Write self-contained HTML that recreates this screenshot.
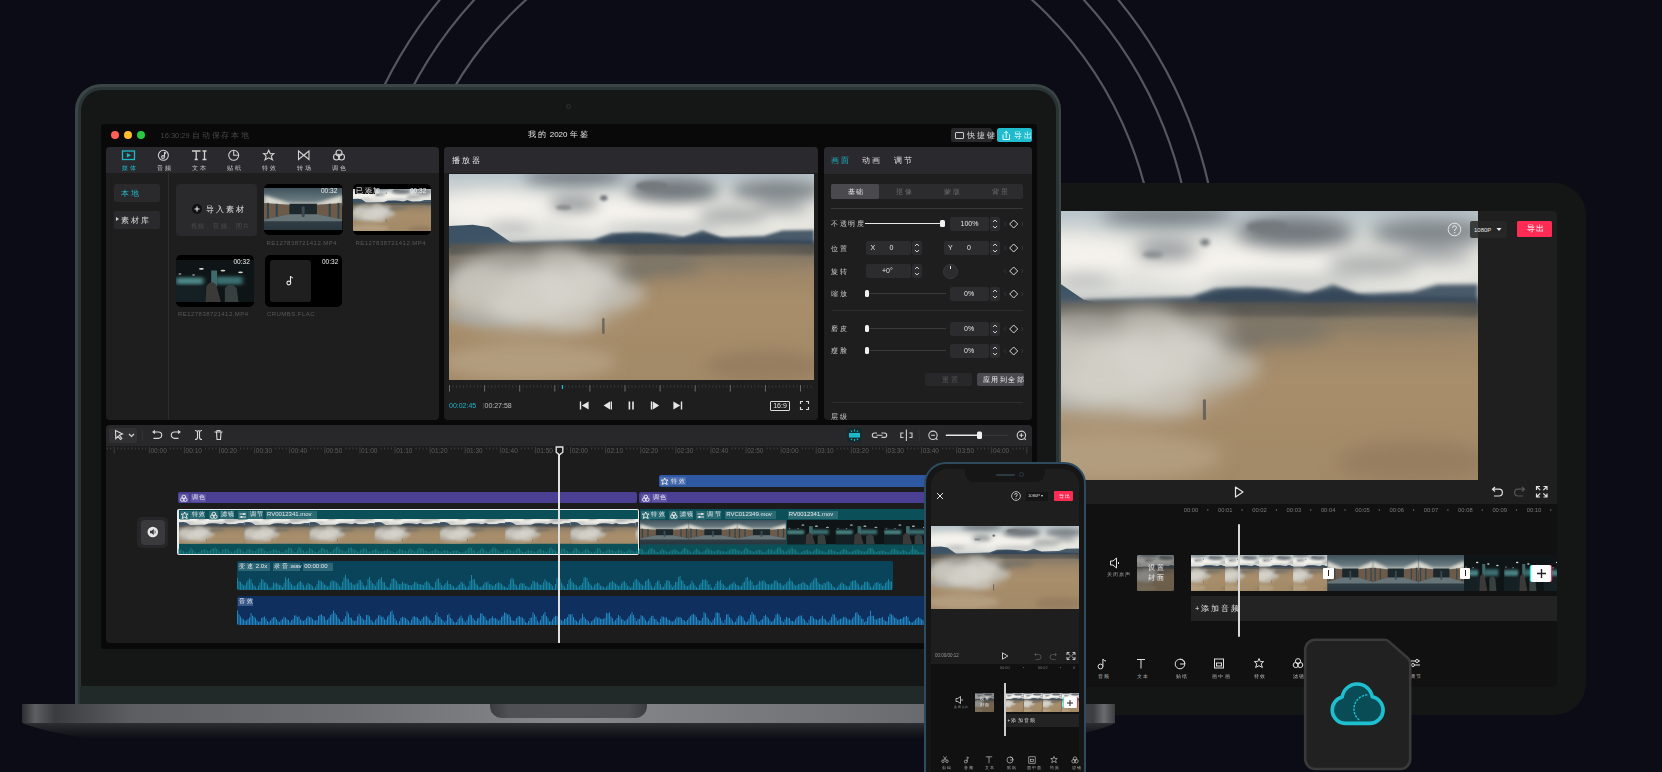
<!DOCTYPE html>
<html><head><meta charset="utf-8">
<style>
*{margin:0;padding:0;box-sizing:border-box}
html,body{width:1662px;height:772px;overflow:hidden;background:#0b0c16;font-family:"Liberation Sans",sans-serif;color:#ddd}
.a{position:absolute}
.cj{letter-spacing:.25em}
svg.a{overflow:visible}
</style></head>
<body>
<svg width="0" height="0" style="position:absolute">
<defs>
<filter id="b2" x="-50%" y="-50%" width="200%" height="200%"><feGaussianBlur stdDeviation="2"/></filter>
<filter id="b4" x="-50%" y="-50%" width="200%" height="200%"><feGaussianBlur stdDeviation="4"/></filter>
<filter id="b8" x="-50%" y="-50%" width="200%" height="200%"><feGaussianBlur stdDeviation="8"/></filter>
<filter id="f6" x="-50%" y="-50%" width="200%" height="200%"><feGaussianBlur stdDeviation="6"/></filter>
<filter id="f12" x="-50%" y="-50%" width="200%" height="200%"><feGaussianBlur stdDeviation="12"/></filter>
<filter id="f25" x="-50%" y="-50%" width="200%" height="200%"><feGaussianBlur stdDeviation="25"/></filter>
<filter id="f40" x="-50%" y="-50%" width="200%" height="200%"><feGaussianBlur stdDeviation="40"/></filter>
<linearGradient id="skyg" x1="0" y1="0" x2="0" y2="1">
<stop offset="0" stop-color="#b8c5cb"/><stop offset="0.25" stop-color="#d4d8d6"/><stop offset="0.5" stop-color="#e6e5df"/><stop offset="0.85" stop-color="#dedfdb"/><stop offset="1" stop-color="#c3c8c8"/>
</linearGradient>
<linearGradient id="gndg" x1="0" y1="0" x2="0" y2="1">
<stop offset="0" stop-color="#5f5d58"/><stop offset="0.1" stop-color="#7a7265"/><stop offset="0.2" stop-color="#9c8668"/><stop offset="0.45" stop-color="#a88e6b"/><stop offset="1" stop-color="#a28967"/>
</linearGradient>
<symbol id="land" viewBox="0 0 1368 772" preserveAspectRatio="none">
<rect y="250" width="1368" height="522" fill="url(#gndg)"/>
<rect width="1368" height="270" fill="url(#skyg)"/>
<g filter="url(#f25)">
<ellipse cx="180" cy="130" rx="230" ry="60" fill="#f4f2ec"/>
<ellipse cx="700" cy="150" rx="300" ry="60" fill="#f5f3ed"/>
<ellipse cx="1180" cy="175" rx="210" ry="45" fill="#e9e8e2"/>
</g>
<g filter="url(#f25)">
<ellipse cx="470" cy="12" rx="190" ry="30" fill="#737a80"/>
<ellipse cx="840" cy="60" rx="170" ry="45" fill="#70767b"/>
<ellipse cx="1230" cy="60" rx="170" ry="38" fill="#7d8388"/>
<ellipse cx="470" cy="112" rx="90" ry="28" fill="#93979a"/>
<ellipse cx="1060" cy="155" rx="130" ry="30" fill="#abafaf"/>
<ellipse cx="230" cy="200" rx="90" ry="16" fill="#b0b3b3"/>
<ellipse cx="800" cy="205" rx="220" ry="18" fill="#babdbc"/>
<ellipse cx="1250" cy="125" rx="100" ry="22" fill="#a4a8aa"/>
</g>
<g filter="url(#f6)">
<ellipse cx="580" cy="90" rx="14" ry="10" fill="#6d7277"/>
<ellipse cx="430" cy="125" rx="30" ry="10" fill="#8a8e91"/>
<ellipse cx="760" cy="45" rx="60" ry="18" fill="#74797e"/>
</g>
<path d="M250 255 L540 246 L610 222 L700 218 L810 224 L880 236 L950 212 L1020 238 L1180 232 L1250 212 L1368 210 L1368 278 L0 282 Z" fill="#485a69" filter="url(#f6)"/>
<path d="M560 250 L640 228 L760 226 L840 246 L960 226 L1060 250 L1200 246 L1368 250 L1368 278 L560 278 Z" fill="#36475a" filter="url(#f6)"/>
<path d="M0 195 L90 190 L150 200 L230 255 L300 272 L0 278 Z" fill="#3d5365"/>
<g filter="url(#f6)">
<rect x="0" y="262" width="1368" height="42" fill="#57554f"/>
</g>
<g filter="url(#f25)">
<ellipse cx="320" cy="370" rx="430" ry="80" fill="#6c685f"/>
<ellipse cx="760" cy="345" rx="200" ry="38" fill="#7c7467"/>
<ellipse cx="1150" cy="330" rx="240" ry="26" fill="#8d7e68"/>
<ellipse cx="1180" cy="720" rx="220" ry="60" fill="#977e60"/>
<ellipse cx="300" cy="705" rx="330" ry="70" fill="#b29d7f"/>
</g>
<g filter="url(#f12)">
<ellipse cx="140" cy="530" rx="150" ry="40" fill="#9b9891" opacity="0.85"/>
</g>
<g filter="url(#f40)">
<ellipse cx="320" cy="440" rx="360" ry="140" fill="#c4c1b9" opacity="0.9"/>
</g>
<g filter="url(#f25)">
<ellipse cx="300" cy="460" rx="170" ry="90" fill="#d3d0c8" opacity="0.9"/>
<ellipse cx="470" cy="410" rx="150" ry="95" fill="#d6d3cb" opacity="0.85"/>
<ellipse cx="120" cy="410" rx="110" ry="80" fill="#c8c5bd" opacity="0.8"/>
<ellipse cx="640" cy="450" rx="100" ry="45" fill="#c2bfb7" opacity="0.7"/>
<ellipse cx="420" cy="320" rx="90" ry="45" fill="#bdbab2" opacity="0.7"/>
<ellipse cx="590" cy="330" rx="70" ry="35" fill="#aeaba3" opacity="0.65"/>
<ellipse cx="200" cy="330" rx="80" ry="30" fill="#a9a69e" opacity="0.6"/>
<ellipse cx="460" cy="550" rx="110" ry="35" fill="#cfccc4" opacity="0.6"/>
</g>
<rect x="574" y="540" width="9" height="60" rx="4" fill="#57544f" opacity="0.75"/>
</symbol>
<symbol id="landS" viewBox="0 0 1368 772" preserveAspectRatio="xMidYMid slice"><use href="#land" width="1368" height="772"/></symbol>
<linearGradient id="ceil" x1="0" y1="0" x2="0" y2="1"><stop offset="0" stop-color="#3f525c"/><stop offset="1" stop-color="#7c8c90"/></linearGradient>
<linearGradient id="flr" x1="0" y1="0" x2="0" y2="1"><stop offset="0" stop-color="#3e4c54"/><stop offset="1" stop-color="#2a363d"/></linearGradient>
<symbol id="corr" viewBox="0 0 80 48" preserveAspectRatio="none">
<rect width="80" height="48" fill="#33424a"/>
<rect width="80" height="20" fill="url(#ceil)"/>
<path d="M0 8 L26 17 L54 17 L80 8 L80 20 L0 20 Z" fill="#d9d8cf" filter="url(#b2)"/>
<path d="M0 20 L80 20 L80 48 L0 48 Z" fill="url(#flr)"/>
<path d="M0 17 L26 19 L26 30 L0 36 Z" fill="#6e5a48"/>
<path d="M80 17 L54 19 L54 30 L80 36 Z" fill="#6e5a48"/>
<rect x="3" y="17" width="2" height="19" fill="#2c4650"/><rect x="12" y="18" width="2" height="15" fill="#2c4650"/>
<rect x="75" y="17" width="2" height="19" fill="#2c4650"/><rect x="66" y="18" width="2" height="15" fill="#2c4650"/>
<rect x="26" y="18" width="28" height="12" fill="#1d282d"/>
<path d="M0 36 L26 30 L54 30 L80 36 L80 38 L0 38 Z" fill="#8a979a" opacity="0.6"/>
<rect x="38.5" y="21" width="3" height="12" rx="1" fill="#3d4a50"/>
</symbol>
<symbol id="crowd" viewBox="0 0 80 48" preserveAspectRatio="none">
<rect width="80" height="48" fill="#0f1517"/>
<rect x="0" y="20" width="28" height="8" fill="#4c8585" filter="url(#b2)"/>
<rect x="40" y="19" width="28" height="9" fill="#3a6e70" filter="url(#b2)"/>
<rect x="36" y="12" width="6" height="18" fill="#3e6a6c"/>
<ellipse cx="26" cy="10" rx="2.5" ry="1" fill="#e0e6e0"/><ellipse cx="48" cy="12" rx="2.5" ry="1" fill="#d0d8d0"/><ellipse cx="66" cy="14" rx="2.5" ry="1" fill="#d0d8d0"/>
<ellipse cx="4" cy="16" rx="1.5" ry="0.8" fill="#aab"/><ellipse cx="18" cy="17" rx="1.5" ry="0.8" fill="#aab"/>
<path d="M30 48 L31 30 Q36 22 41 28 L46 48 Z" fill="#3b3a38"/>
<path d="M50 48 L50 32 Q56 24 62 32 L64 48 Z" fill="#38403f"/>
<rect x="0" y="30" width="30" height="18" fill="#142024"/>
</symbol>
</defs>
</svg>

<!-- arcs -->
<svg class="a" style="left:0;top:0" width="1662" height="772">
<g fill="none" stroke="#55575f" stroke-width="2.2">
<circle cx="779" cy="280" r="377.5"/>
<circle cx="779" cy="280" r="414"/>
<circle cx="779" cy="280" r="440"/>
</g>
</svg>


<!-- TABLET -->
<div class="a" style="left:960px;top:183px;width:626px;height:532px;background:#141615;border-radius:32px"></div>
<div class="a" style="left:1000px;top:211px;width:557px;height:476px;background:#111;border-radius:4px;overflow:hidden">
</div>
<svg class="a" style="left:1004px;top:211px" width="474" height="269"><use href="#land" width="474" height="269"/></svg>
<div class="a" style="left:1478px;top:211px;width:79px;height:269px;background:#1f1f1f;border-radius:0 4px 0 0"></div>
<div class="a" style="left:1004px;top:480px;width:553px;height:23.5px;background:#1f1f1f"></div>


<svg class="a" style="left:1446px;top:221px" width="17" height="17"><circle cx="8.5" cy="8.5" r="6.3" fill="none" stroke="#e6e6e6" stroke-width="1"/><path d="M6.5 7 Q6.5 4.8 8.5 4.8 Q10.5 4.8 10.5 6.7 Q10.5 8 8.6 8.8 V10" fill="none" stroke="#e6e6e6" stroke-width="1"/><circle cx="8.6" cy="11.8" r="0.7" fill="#e6e6e6"/></svg>
<div class="a" style="left:1470px;top:221.4px;width:36.8px;height:16.2px;background:rgba(40,40,40,.85);border-radius:2px"></div>
<div class="a" style="left:1474px;top:225.5px;font-size:6px;line-height:8px;color:#e6e6e6;white-space:nowrap">1080P</div>
<svg class="a" style="left:1496px;top:227px" width="6" height="5"><path d="M0.5 1 H5.5 L3 4 Z" fill="#eee"/></svg>
<div class="a" style="left:1517px;top:221px;width:34.7px;height:16.2px;background:#fe2c55;border-radius:1.5px"></div>
<div class="a" style="left:1526.5px;top:225px;font-size:7.5px;line-height:8px;color:#fff;white-space:nowrap"><span class="cj">导出</span></div>
<svg class="a" style="left:1232px;top:484.5px" width="14" height="14"><path d="M3.5 2 L11 7 L3.5 12 Z" fill="none" stroke="#e6e6e6" stroke-width="1.2" stroke-linejoin="round"/></svg>
<svg class="a" style="left:1488px;top:484px" width="62" height="16"><g fill="none" stroke-width="1.2"><path d="M4.5 5.2 H11 A3.4 3.4 0 0 1 11 12 H6 M7 3 L4.5 5.2 L7 7.5" stroke="#e0e0e0"/><path d="M36.5 5.2 H30 A3.4 3.4 0 0 0 30 12 H35 M34 3 L36.5 5.2 L34 7.5" stroke="#555"/><path d="M48.5 6 V2.5 H52 M55.5 2.5 H59 V6 M59 9.5 V13 H55.5 M52 13 H48.5 V9.5 M49 3 L52.2 6.2 M58.5 3 L55.3 6.2 M58.5 12.5 L55.3 9.3 M49 12.5 L52.2 9.3" stroke="#e0e0e0"/></g></svg>
<div class="a" style="left:0;top:506.5px;font-size:5.8px;line-height:7px;color:#7a7a7a;white-space:nowrap"><span class="a" style="left:1183.7px">00:00</span><span class="a" style="left:1218.0px">00:01</span><span class="a" style="left:1252.3px">00:02</span><span class="a" style="left:1286.6px">00:03</span><span class="a" style="left:1320.9px">00:04</span><span class="a" style="left:1355.2px">00:05</span><span class="a" style="left:1389.5px">00:06</span><span class="a" style="left:1423.8px">00:07</span><span class="a" style="left:1458.1px">00:08</span><span class="a" style="left:1492.4px">00:09</span><span class="a" style="left:1526.7px">00:10</span></div>
<svg class="a" style="left:0;top:0" width="1600" height="600"><g fill="#777"><circle cx="1207.8" cy="510" r="0.7"/><circle cx="1242.1" cy="510" r="0.7"/><circle cx="1276.4" cy="510" r="0.7"/><circle cx="1310.7" cy="510" r="0.7"/><circle cx="1345.0" cy="510" r="0.7"/><circle cx="1379.3" cy="510" r="0.7"/><circle cx="1413.6" cy="510" r="0.7"/><circle cx="1447.9" cy="510" r="0.7"/><circle cx="1482.2" cy="510" r="0.7"/><circle cx="1516.5" cy="510" r="0.7"/><circle cx="1550.8" cy="510" r="0.7"/></g></svg>
<svg class="a" style="left:1108px;top:556px" width="14" height="14"><path d="M2.5 5 H5 L8.5 2 V12 L5 9 H2.5 Z" fill="none" stroke="#e0e0e0" stroke-width="1"/><path d="M10.5 6 V8" stroke="#e0e0e0" stroke-width="1"/></svg>
<div class="a" style="left:1106.5px;top:572px;font-size:4.6px;line-height:6px;color:#aaa;white-space:nowrap"><span class="cj">关闭原声</span></div>
<div class="a" style="left:1137px;top:555px;width:37px;height:36px;border-radius:2px;overflow:hidden"><svg class="a" style="left:-10px;top:0" width="64" height="36"><use href="#land" width="64" height="36"/></svg><div class="a" style="left:0;top:0;width:37px;height:36px;background:rgba(40,40,40,.45)"></div></div>
<div class="a" style="left:1148px;top:563px;font-size:7px;line-height:9.5px;color:#f0f0f0;white-space:nowrap;width:20px"><span class="cj">设置</span><br><span class="cj">封面</span></div>
<div class="a" style="left:1191px;top:555px;width:366px;height:36px;overflow:hidden"><svg class="a" style="left:0;top:0" width="366" height="36"><use href="#landS" x="0.0" y="0" width="34.6" height="36"/><use href="#landS" x="34.1" y="0" width="34.6" height="36"/><use href="#landS" x="68.2" y="0" width="34.6" height="36"/><use href="#landS" x="102.3" y="0" width="34.6" height="36"/><use href="#corr" x="136.3" y="0" width="46" height="36"/><use href="#corr" x="181.8" y="0" width="46" height="36"/><use href="#corr" x="227.3" y="0" width="46" height="36"/><use href="#crowd" x="273.0" y="0" width="40.5" height="36"/><use href="#crowd" x="313.0" y="0" width="40.5" height="36"/><use href="#crowd" x="353.0" y="0" width="40.5" height="36"/></svg></div>
<div class="a" style="left:1323px;top:567.5px;width:10.7px;height:11.2px;background:#fff;border-radius:1px"></div><div class="a" style="left:1327.8px;top:570px;width:1.2px;height:6.2px;background:#222"></div>
<div class="a" style="left:1459.7px;top:567.5px;width:10.8px;height:11.2px;background:#fff;border-radius:1px"></div><div class="a" style="left:1464.5px;top:570px;width:1.2px;height:6.2px;background:#222"></div>
<div class="a" style="left:1531px;top:564.6px;width:19.7px;height:17.2px;background:#fff;border-radius:2px;box-shadow:-1.2px 0 0 #25f4ee,1.2px 0 0 #fe2c55"></div>
<svg class="a" style="left:1533.5px;top:566px" width="15" height="15"><path d="M7.5 3 V12 M3 7.5 H12" stroke="#222" stroke-width="1.4"/></svg>
<div class="a" style="left:1191px;top:596px;width:366px;height:25px;background:#232323"></div>
<div class="a" style="left:1195px;top:604px;font-size:7.5px;line-height:9px;color:#e6e6e6;white-space:nowrap">+ <span class="cj">添加音频</span></div>
<div class="a" style="left:1238px;top:524px;width:1.8px;height:113px;background:#d8d8d8;border-radius:1px"></div>
<svg class="a" style="left:1095.3px;top:656px" width="14" height="14"><g fill="none" stroke="#e0e0e0" stroke-width="1"><circle cx="5.5" cy="10.5" r="2.4"/><path d="M7.9 10.5 V3 Q9 5 11 5"/></g></svg>
<div class="a" style="left:1097.5px;top:672.5px;font-size:5.3px;line-height:6px;color:#bbb;white-space:nowrap"><span class="cj">音频</span></div>
<svg class="a" style="left:1134.3px;top:656px" width="14" height="14"><g fill="none" stroke="#e0e0e0" stroke-width="1"><path d="M3 3.5 H11 M7 3.5 V12.5"/></g></svg>
<div class="a" style="left:1136.5px;top:672.5px;font-size:5.3px;line-height:6px;color:#bbb;white-space:nowrap"><span class="cj">文本</span></div>
<svg class="a" style="left:1173.4px;top:656px" width="14" height="14"><g fill="none" stroke="#e0e0e0" stroke-width="1"><circle cx="7" cy="8" r="4.8"/><path d="M7 3.2 Q11.8 3.2 11.8 8 L7 8"/></g></svg>
<div class="a" style="left:1175.6px;top:672.5px;font-size:5.3px;line-height:6px;color:#bbb;white-space:nowrap"><span class="cj">贴纸</span></div>
<svg class="a" style="left:1212.4px;top:656px" width="14" height="14"><g fill="none" stroke="#e0e0e0" stroke-width="1"><rect x="2.5" y="3" width="9" height="9"/><rect x="4.5" y="7" width="5" height="3"/></g></svg>
<div class="a" style="left:1212.0px;top:672.5px;font-size:5.3px;line-height:6px;color:#bbb;white-space:nowrap"><span class="cj">画中画</span></div>
<svg class="a" style="left:1251.5px;top:656px" width="14" height="14"><g fill="none" stroke="#e0e0e0" stroke-width="1"><path d="M7 2.5 L8.3 5.7 L11.6 5.5 L9.2 8 L10.4 11.5 L7 9.7 L3.6 11.5 L4.8 8 L2.4 5.5 L5.7 5.7 Z"/></g></svg>
<div class="a" style="left:1253.7px;top:672.5px;font-size:5.3px;line-height:6px;color:#bbb;white-space:nowrap"><span class="cj">特效</span></div>
<svg class="a" style="left:1290.5px;top:656px" width="14" height="14"><g fill="none" stroke="#e0e0e0" stroke-width="1"><circle cx="7" cy="5.2" r="2.6"/><circle cx="4.8" cy="9" r="2.6"/><circle cx="9.2" cy="9" r="2.6"/></g></svg>
<div class="a" style="left:1292.7px;top:672.5px;font-size:5.3px;line-height:6px;color:#bbb;white-space:nowrap"><span class="cj">滤镜</span></div>
<svg class="a" style="left:1407.6px;top:656px" width="14" height="14"><g fill="none" stroke="#e0e0e0" stroke-width="1"><path d="M2 5 H12 M2 9 H12"/><circle cx="9" cy="5" r="1.5" fill="#111"/><circle cx="5" cy="9" r="1.5" fill="#111"/></g></svg>
<div class="a" style="left:1409.8px;top:672.5px;font-size:5.3px;line-height:6px;color:#bbb;white-space:nowrap"><span class="cj">调节</span></div>
<!-- LAPTOP -->
<div class="a" style="left:75px;top:84px;width:986px;height:620px;background:#3b4545;border-radius:26px 26px 0 0"></div><div class="a" style="left:77.5px;top:86.5px;width:981px;height:617px;background:#2b3434;border-radius:23.5px 23.5px 0 0"></div><div class="a" style="left:80.5px;top:89.5px;width:975px;height:614.5px;background:#141716;border-radius:20.5px 20.5px 0 0"></div>
<div class="a" style="left:80px;top:686px;width:976px;height:18px;background:#222a29"></div>
<div class="a" style="left:565.5px;top:103.5px;width:5px;height:5px;border:1px solid #2e3232;border-radius:50%"></div>
<div class="a" style="left:101px;top:123.5px;width:936px;height:525.5px;background:#09090a;border-radius:3px"></div>
<div class="a" style="left:22px;top:704px;width:1093px;height:19px;background:linear-gradient(90deg,#2a2c2f 0%,#5d5f62 1.2%,#3a3c3f 3%,#5c5e61 10%,#6c6e71 30%,#86888b 50%,#707275 75%,#5e6063 92%,#3b3d40 98%,#6a6c6f 99%,#3a3c3e 100%)"></div>
<div class="a" style="left:490px;top:704px;width:157px;height:13.5px;background:linear-gradient(90deg,#3a3c3f,#4e5053 12%,#505256 50%,#4e5053 88%,#3a3c3f);border-radius:0 0 12px 12px"></div>
<svg class="a" style="left:0;top:720px" width="1130" height="22"><defs><linearGradient id="bsh" x1="0" y1="0" x2="0" y2="1"><stop offset="0" stop-color="#2c2e32"/><stop offset="0.5" stop-color="#1c1d22"/><stop offset="1" stop-color="#0d0e16"/></linearGradient></defs>
<path d="M22 3 H1115 Q1100 11 1060 18 H85 Q45 12 22 3 Z" fill="url(#bsh)"/></svg>



<!-- SCREEN UI -->
<div class="a" style="left:110.5px;top:131px;width:8.4px;height:8.4px;border-radius:50%;background:#fe5f57"></div>
<div class="a" style="left:123.6px;top:131px;width:8.4px;height:8.4px;border-radius:50%;background:#febc2e"></div>
<div class="a" style="left:136.7px;top:131px;width:8.4px;height:8.4px;border-radius:50%;background:#28c840"></div>
<div class="a" style="left:160.5px;top:130.5px;font-size:7.5px;line-height:9px;color:#47474a;white-space:nowrap">16:30:29 <span class="cj">自动保存本地</span></div>
<div class="a" style="left:527.5px;top:130px;font-size:8px;line-height:9px;color:#e6e6e6;white-space:nowrap"><span class="cj">我的</span> 2020 <span class="cj">年鉴</span></div>
<div class="a" style="left:951px;top:128px;width:40.5px;height:14px;background:#29292c;border-radius:2.5px"></div>
<div class="a" style="left:954.5px;top:131.5px;width:9px;height:7px;border:1px solid #cfcfcf;border-radius:1px"></div>
<div class="a" style="left:967px;top:130.5px;font-size:7.5px;line-height:9px;color:#d8d8d8;white-space:nowrap"><span class="cj">快捷键</span></div>
<div class="a" style="left:997px;top:128px;width:35px;height:14.3px;background:#1ebccc;border-radius:2.5px"></div>
<svg class="a" style="left:1001px;top:129.5px" width="10" height="11"><path d="M2 4.5 V9.5 H8.5 V4.5 M5.2 8 V1.5 M3.2 3.3 L5.2 1.3 L7.2 3.3" fill="none" stroke="#e8fbfd" stroke-width="1"/></svg>
<div class="a" style="left:1014px;top:130.5px;font-size:7.5px;line-height:9px;color:#eafcfe;white-space:nowrap"><span class="cj">导出</span></div>

<!-- media panel -->
<div class="a" style="left:106px;top:147px;width:333px;height:272.5px;background:#1e1e1f;border-radius:4px;overflow:hidden">
  <div class="a" style="left:0;top:0;width:333px;height:26px;background:#2a292e"></div>
  <div class="a" style="left:62px;top:26px;width:1px;height:247px;background:#2c2c2e"></div>
</div>
<!-- player panel -->
<div class="a" style="left:444px;top:147px;width:374px;height:272.5px;background:#1e1e1f;border-radius:4px;overflow:hidden">
  <div class="a" style="left:0;top:0;width:374px;height:26px;background:#2a292e"></div>
</div>

<!-- media tabs -->
<svg class="a" style="left:106px;top:147px" width="333" height="26">
<g fill="none" stroke="#d0d0d0" stroke-width="1.1">
<rect x="16.5" y="4" width="12" height="8.5" stroke="#1fb8c8" stroke-width="1.3"/>
<path d="M20.8 6 L25 8.2 L20.8 10.4 Z" fill="#1fb8c8" stroke="none"/>
<circle cx="57.4" cy="8.3" r="5"/>
<path d="M58.5 5 V10 M58.5 5 L60 6.5" /><circle cx="57" cy="10" r="1.4"/>
<path d="M86 4 H94.5 M90.2 4 V12.5 M88.6 12.5 H91.8 M96.5 4 H100.5 M98.5 4 V12.5 M96.5 12.5 H100.5" stroke-width="1.3"/>
<circle cx="127.7" cy="8.3" r="5"/><path d="M127.7 3.3 V8.3 L132.7 8.3"/>
<path d="M162.7 3.3 L164.2 6.8 L167.8 6.6 L165.2 9.2 L166.5 12.8 L162.7 10.8 L159 12.8 L160.2 9.2 L157.6 6.6 L161.2 6.8 Z"/>
<path d="M192.5 4 V12.5 L203 4 V12.5 Z"/>
<circle cx="233" cy="6" r="3"/><circle cx="230.5" cy="10" r="3"/><circle cx="235.5" cy="10" r="3"/>
</g>
</svg>
<div class="a" style="left:106px;top:163.5px;width:333px;font-size:6.4px;line-height:7px;white-space:nowrap">
<span class="a" style="left:16px;color:#1fb8c8"><span class="cj">媒体</span></span>
<span class="a" style="left:51px;color:#c8c8c8"><span class="cj">音频</span></span>
<span class="a" style="left:86px;color:#c8c8c8"><span class="cj">文本</span></span>
<span class="a" style="left:121px;color:#c8c8c8"><span class="cj">贴纸</span></span>
<span class="a" style="left:156px;color:#c8c8c8"><span class="cj">特效</span></span>
<span class="a" style="left:191px;color:#c8c8c8"><span class="cj">转场</span></span>
<span class="a" style="left:226px;color:#c8c8c8"><span class="cj">调色</span></span>
</div>
<!-- sidebar -->
<div class="a" style="left:113.7px;top:183.8px;width:46.7px;height:18.2px;background:#2a2a2c;border-radius:2.5px"></div>
<div class="a" style="left:121px;top:188.5px;font-size:7.5px;line-height:9px;color:#1fb8c8;white-space:nowrap"><span class="cj">本地</span></div>
<div class="a" style="left:113.7px;top:210.5px;width:46.7px;height:18.4px;background:#2a2a2c;border-radius:2.5px"></div>
<svg class="a" style="left:115px;top:216px" width="5" height="6"><path d="M1 1 L4 3 L1 5 Z" fill="#cfcfcf"/></svg>
<div class="a" style="left:121px;top:215.5px;font-size:7.5px;line-height:9px;color:#dcdcdc;white-space:nowrap"><span class="cj">素材库</span></div>
<!-- import -->
<div class="a" style="left:176.2px;top:184.2px;width:80.7px;height:51.6px;background:#2a2a2c;border-radius:4px"></div>
<div class="a" style="left:192px;top:204px;width:10px;height:10px;border-radius:50%;background:#111"></div>
<svg class="a" style="left:192px;top:204px" width="10" height="10"><path d="M5 2.5 V7.5 M2.5 5 H7.5" stroke="#eee" stroke-width="1.1"/></svg>
<div class="a" style="left:206px;top:205px;font-size:8px;line-height:9px;color:#e0e0e0;white-space:nowrap"><span class="cj">导入素材</span></div>
<div class="a" style="left:190.5px;top:222.5px;font-size:6px;line-height:7px;color:#4e4e50;white-space:nowrap"><span class="cj">视频、音频、图片</span></div>
<!-- thumbs -->
<div class="a" style="left:264.2px;top:184.2px;width:78.4px;height:51.2px;background:#000;border-radius:5px;overflow:hidden">
 <svg class="a" style="left:0;top:4.2px" width="78.4" height="42"><use href="#corr" width="78.4" height="42"/></svg>
</div>
<div class="a" style="left:321px;top:186.5px;font-size:6.5px;line-height:7px;color:#f0f0f0;white-space:nowrap">00:32</div>
<div class="a" style="left:352.7px;top:184.2px;width:78.3px;height:51.2px;background:#000;border-radius:5px;overflow:hidden">
 <svg class="a" style="left:0;top:4.7px" width="78.3" height="42"><use href="#landS" width="78.3" height="42"/></svg>
</div>
<div class="a" style="left:354.5px;top:186.8px;width:20px;height:7.5px;background:#111;"></div>
<div class="a" style="left:356px;top:186.8px;font-size:6.5px;line-height:7px;color:#f0f0f0;white-space:nowrap"><span class="cj">已添加</span></div>
<div class="a" style="left:410px;top:186.8px;font-size:6.5px;line-height:7px;color:#f0f0f0;white-space:nowrap">00:32</div>
<div class="a" style="left:266.5px;top:239.5px;font-size:6px;letter-spacing:.45px;line-height:7px;color:#58585a;white-space:nowrap">RE127838721412.MP4</div>
<div class="a" style="left:355.5px;top:239.5px;font-size:6px;letter-spacing:.45px;line-height:7px;color:#58585a;white-space:nowrap">RE127838721412.MP4</div>
<div class="a" style="left:175.9px;top:255px;width:78.2px;height:51.8px;background:#000;border-radius:5px;overflow:hidden">
 <svg class="a" style="left:0;top:4.5px" width="78.2" height="42"><use href="#crowd" width="78.2" height="42"/></svg>
</div>
<div class="a" style="left:233.5px;top:258px;font-size:6.5px;line-height:7px;color:#f0f0f0;white-space:nowrap">00:32</div>
<div class="a" style="left:264.5px;top:255px;width:77.7px;height:51.8px;background:#000;border-radius:5px"></div>
<div class="a" style="left:269.7px;top:260.2px;width:41.3px;height:41.8px;background:#1f1f20;border-radius:3px"></div>
<svg class="a" style="left:284px;top:274px" width="12" height="13"><path d="M6.5 2 V9" stroke="#e6e6e6" stroke-width="1.1" fill="none"/><circle cx="4.8" cy="9" r="1.9" fill="none" stroke="#e6e6e6" stroke-width="1.1"/><path d="M6.5 2 Q7.5 4 9 4" stroke="#e6e6e6" stroke-width="1" fill="none"/></svg>
<div class="a" style="left:322px;top:258px;font-size:6.5px;line-height:7px;color:#f0f0f0;white-space:nowrap">00:32</div>
<div class="a" style="left:178px;top:311px;font-size:6px;letter-spacing:.45px;line-height:7px;color:#58585a;white-space:nowrap">RE127838721412.MP4</div>
<div class="a" style="left:267px;top:311px;font-size:6px;letter-spacing:.45px;line-height:7px;color:#58585a;white-space:nowrap">CRUMBS.FLAC</div>

<div class="a" style="left:452px;top:155.5px;font-size:8px;line-height:9px;color:#e6e6e6;white-space:nowrap"><span class="cj">播放器</span></div>
<svg class="a" style="left:449px;top:174px" width="365" height="206"><use href="#land" width="365" height="206"/></svg>
<!-- props panel -->
<div class="a" style="left:824px;top:147px;width:208px;height:272.5px;background:#1e1e1f;border-radius:4px;overflow:hidden">
  <div class="a" style="left:0;top:0;width:208px;height:27px;background:#2a292e"></div>
</div>

<!-- player controls -->
<svg class="a" style="left:449px;top:382px" width="365" height="11">
<path d="M4.01 3v3M7.52 3v3M11.03 3v3M14.54 3v3M18.05 3v3M21.56 3v3M25.07 3v3M28.58 3v3M32.09 3v3M39.11 3v3M42.62 3v3M46.13 3v3M49.64 3v3M53.15 3v3M56.66 3v3M60.17 3v3M63.68 3v3M67.19 3v3M74.21 3v3M77.72 3v3M81.23 3v3M84.74 3v3M88.25 3v3M91.76 3v3M95.27 3v3M98.78 3v3M102.29 3v3M109.31 3v3M112.82 3v3M116.33 3v3M119.84 3v3M123.35 3v3M126.86 3v3M130.37 3v3M133.88 3v3M137.39 3v3M144.41 3v3M147.92 3v3M151.43 3v3M154.94 3v3M158.45 3v3M161.96 3v3M165.47 3v3M168.98 3v3M172.49 3v3M179.51 3v3M183.02 3v3M186.53 3v3M190.04 3v3M193.55 3v3M197.06 3v3M200.57 3v3M204.08 3v3M207.59 3v3M214.61 3v3M218.12 3v3M221.63 3v3M225.14 3v3M228.65 3v3M232.16 3v3M235.67 3v3M239.18 3v3M242.69 3v3M249.71 3v3M253.22 3v3M256.73 3v3M260.24 3v3M263.75 3v3M267.26 3v3M270.77 3v3M274.28 3v3M277.79 3v3M284.81 3v3M288.32 3v3M291.83 3v3M295.34 3v3M298.85 3v3M302.36 3v3M305.87 3v3M309.38 3v3M312.89 3v3M319.91 3v3M323.42 3v3M326.93 3v3M330.44 3v3M333.95 3v3M337.46 3v3M340.97 3v3M344.48 3v3M347.99 3v3M355.01 3v3M358.52 3v3M362.03 3v3" stroke="#363638" stroke-width="0.9"/>
<path d="M0.50 3v6.6M35.60 3v6.6M70.70 3v6.6M105.80 3v6.6M140.90 3v6.6M176.00 3v6.6M211.10 3v6.6M246.20 3v6.6M281.30 3v6.6M316.40 3v6.6M351.50 3v6.6" stroke="#6a6a6c" stroke-width="1"/>
<line x1="113.5" y1="3" x2="113.5" y2="7" stroke="#1fb8c8" stroke-width="1.2"/>
</svg>
<div class="a" style="left:449px;top:401.5px;font-size:7px;line-height:8px;color:#1fb8c8;white-space:nowrap">00:02:45</div>
<div class="a" style="left:482.5px;top:403px;width:1px;height:6px;background:#3a3a3c"></div>
<div class="a" style="left:484.5px;top:401.5px;font-size:7px;line-height:8px;color:#bdbdbd;white-space:nowrap">00:27:58</div>
<svg class="a" style="left:575px;top:398px" width="115" height="15">
<g fill="#e6e6e6">
<rect x="4.8" y="3.5" width="1.4" height="8"/><path d="M13.6 3.5 V11.5 L6.8 7.5 Z"/>
<path d="M35 3.5 V11.5 L28.6 7.5 Z"/><rect x="35.6" y="3.5" width="1.4" height="8"/>
<rect x="53.6" y="3.5" width="1.6" height="8"/><rect x="57.2" y="3.5" width="1.6" height="8"/>
<rect x="75.8" y="3.5" width="1.4" height="8"/><path d="M77.8 3.5 V11.5 L84.2 7.5 Z"/>
<path d="M98.4 3.5 V11.5 L105.2 7.5 Z"/><rect x="105.8" y="3.5" width="1.4" height="8"/>
</g>
</svg>
<div class="a" style="left:770px;top:400.5px;width:20px;height:10px;border:1px solid #dcdcdc;border-radius:1px"></div>
<div class="a" style="left:770px;top:401.5px;width:20px;text-align:center;font-size:7px;line-height:8px;color:#e6e6e6">16:9</div>
<svg class="a" style="left:799px;top:400px" width="11" height="11"><path d="M1.5 4 V1.5 H4 M7 1.5 H9.5 V4 M9.5 7 V9.5 H7 M4 9.5 H1.5 V7" fill="none" stroke="#dcdcdc" stroke-width="1.1"/></svg>

<!-- props -->
<div class="a" style="left:831px;top:156px;font-size:7.5px;line-height:9px;color:#1fb8c8;white-space:nowrap"><span class="cj">画面</span></div>
<div class="a" style="left:862.2px;top:156px;font-size:7.5px;line-height:9px;color:#e0e0e0;white-space:nowrap"><span class="cj">动画</span></div>
<div class="a" style="left:893.7px;top:156px;font-size:7.5px;line-height:9px;color:#e0e0e0;white-space:nowrap"><span class="cj">调节</span></div>
<div class="a" style="left:831px;top:184.1px;width:192.2px;height:14.8px;background:#2c2c2f;border-radius:2px"></div>
<div class="a" style="left:831px;top:184.1px;width:48px;height:14.8px;background:#4a4a4e;border-radius:2px"></div>
<div class="a" style="left:847.5px;top:187.5px;font-size:6.5px;line-height:8px;color:#e8e8e8;white-space:nowrap"><span class="cj">基础</span></div>
<div class="a" style="left:896px;top:187.5px;font-size:6.5px;line-height:8px;color:#6a6a6c;white-space:nowrap"><span class="cj">抠像</span></div>
<div class="a" style="left:944px;top:187.5px;font-size:6.5px;line-height:8px;color:#6a6a6c;white-space:nowrap"><span class="cj">蒙版</span></div>
<div class="a" style="left:992px;top:187.5px;font-size:6.5px;line-height:8px;color:#6a6a6c;white-space:nowrap"><span class="cj">背景</span></div>
<div class="a" style="left:831px;top:207.5px;width:192px;height:1px;background:#38383a"></div>
<div class="a" style="left:831px;top:219.0px;font-size:6.5px;line-height:9px;color:#d0d0d0;white-space:nowrap"><span class="cj">不透明度</span></div>
<div class="a" style="left:864.5px;top:222.7px;width:78.10000000000002px;height:1.6px;background:#e8e8e8"></div>
<div class="a" style="left:940.3000000000001px;top:219.7px;width:4.6px;height:7.6px;background:#f0f0f0;border-radius:1.5px"></div>
<div class="a" style="left:950.4px;top:216.5px;width:38.39999999999998px;height:14px;background:#2c2c2f;border-radius:2px"></div>
<div class="a" style="left:990.3px;top:216.5px;width:10px;height:14px;background:#2c2c2f;border-radius:2px"></div>
<svg class="a" style="left:990.3px;top:216.5px" width="10" height="14"><path d="M3 5 L5 3 L7 5 M3 9 L5 11 L7 9" fill="none" stroke="#cfcfcf" stroke-width="1"/></svg>
<div class="a" style="left:960.5px;top:219.5px;font-size:7px;line-height:8px;color:#e6e6e6;white-space:nowrap">100%</div>
<svg class="a" style="left:1003px;top:217.5px" width="22" height="12"><path d="M10.7 2 L14.7 6 L10.7 10 L6.7 6 Z" fill="none" stroke="#d6d6d6" stroke-width="1"/><path d="M3 4 L1.5 6 L3 8 M18.5 4 L20 6 L18.5 8" fill="none" stroke="#3a3a3c" stroke-width="0.8"/></svg>
<div class="a" style="left:831px;top:243.7px;font-size:6.5px;line-height:9px;color:#d0d0d0;white-space:nowrap"><span class="cj">位置</span></div>
<div class="a" style="left:865.9px;top:241.2px;width:44.89999999999998px;height:14px;background:#2c2c2f;border-radius:2px"></div>
<div class="a" style="left:912.3px;top:241.2px;width:10px;height:14px;background:#2c2c2f;border-radius:2px"></div>
<svg class="a" style="left:912.3px;top:241.2px" width="10" height="14"><path d="M3 5 L5 3 L7 5 M3 9 L5 11 L7 9" fill="none" stroke="#cfcfcf" stroke-width="1"/></svg>
<div class="a" style="left:870.5px;top:244.2px;font-size:7px;line-height:8px;color:#e6e6e6;white-space:nowrap">X</div>
<div class="a" style="left:889.5px;top:244.2px;font-size:7px;line-height:8px;color:#e6e6e6;white-space:nowrap">0</div>
<div class="a" style="left:943.6px;top:241.2px;width:45.19999999999993px;height:14px;background:#2c2c2f;border-radius:2px"></div>
<div class="a" style="left:990.3px;top:241.2px;width:10px;height:14px;background:#2c2c2f;border-radius:2px"></div>
<svg class="a" style="left:990.3px;top:241.2px" width="10" height="14"><path d="M3 5 L5 3 L7 5 M3 9 L5 11 L7 9" fill="none" stroke="#cfcfcf" stroke-width="1"/></svg>
<div class="a" style="left:948px;top:244.2px;font-size:7px;line-height:8px;color:#e6e6e6;white-space:nowrap">Y</div>
<div class="a" style="left:967px;top:244.2px;font-size:7px;line-height:8px;color:#e6e6e6;white-space:nowrap">0</div>
<svg class="a" style="left:1003px;top:242.2px" width="22" height="12"><path d="M10.7 2 L14.7 6 L10.7 10 L6.7 6 Z" fill="none" stroke="#d6d6d6" stroke-width="1"/><path d="M3 4 L1.5 6 L3 8 M18.5 4 L20 6 L18.5 8" fill="none" stroke="#3a3a3c" stroke-width="0.8"/></svg>
<div class="a" style="left:831px;top:266.6px;font-size:6.5px;line-height:9px;color:#d0d0d0;white-space:nowrap"><span class="cj">旋转</span></div>
<div class="a" style="left:865.9px;top:264.1px;width:44.89999999999998px;height:14px;background:#2c2c2f;border-radius:2px"></div>
<div class="a" style="left:912.3px;top:264.1px;width:10px;height:14px;background:#2c2c2f;border-radius:2px"></div>
<svg class="a" style="left:912.3px;top:264.1px" width="10" height="14"><path d="M3 5 L5 3 L7 5 M3 9 L5 11 L7 9" fill="none" stroke="#cfcfcf" stroke-width="1"/></svg>
<div class="a" style="left:882px;top:267.1px;font-size:7px;line-height:8px;color:#e6e6e6;white-space:nowrap">+0°</div>
<div class="a" style="left:943px;top:263.6px;width:15px;height:15px;border-radius:50%;background:#2c2c2f;border:1px solid #3a3a3c"></div>
<div class="a" style="left:950px;top:266.1px;width:1px;height:3px;background:#e0e0e0"></div>
<svg class="a" style="left:1003px;top:265.1px" width="22" height="12"><path d="M10.7 2 L14.7 6 L10.7 10 L6.7 6 Z" fill="none" stroke="#d6d6d6" stroke-width="1"/><path d="M3 4 L1.5 6 L3 8 M18.5 4 L20 6 L18.5 8" fill="none" stroke="#3a3a3c" stroke-width="0.8"/></svg>
<div class="a" style="left:831px;top:289.1px;font-size:6.5px;line-height:9px;color:#d0d0d0;white-space:nowrap"><span class="cj">缩放</span></div>
<div class="a" style="left:867px;top:293.1px;width:78.5px;height:1px;background:#3a3a3c"></div>
<div class="a" style="left:864.7px;top:289.8px;width:4.6px;height:7.6px;background:#f0f0f0;border-radius:1.5px"></div>
<div class="a" style="left:950.4px;top:286.6px;width:38.39999999999998px;height:14px;background:#2c2c2f;border-radius:2px"></div>
<div class="a" style="left:990.3px;top:286.6px;width:10px;height:14px;background:#2c2c2f;border-radius:2px"></div>
<svg class="a" style="left:990.3px;top:286.6px" width="10" height="14"><path d="M3 5 L5 3 L7 5 M3 9 L5 11 L7 9" fill="none" stroke="#cfcfcf" stroke-width="1"/></svg>
<div class="a" style="left:964px;top:289.6px;font-size:7px;line-height:8px;color:#e6e6e6;white-space:nowrap">0%</div>
<svg class="a" style="left:1003px;top:287.6px" width="22" height="12"><path d="M10.7 2 L14.7 6 L10.7 10 L6.7 6 Z" fill="none" stroke="#d6d6d6" stroke-width="1"/><path d="M3 4 L1.5 6 L3 8 M18.5 4 L20 6 L18.5 8" fill="none" stroke="#3a3a3c" stroke-width="0.8"/></svg>
<div class="a" style="left:832px;top:310px;width:191px;height:1px;background:#2e2e30"></div>
<div class="a" style="left:831px;top:324.1px;font-size:6.5px;line-height:9px;color:#d0d0d0;white-space:nowrap"><span class="cj">磨皮</span></div>
<div class="a" style="left:867px;top:328.1px;width:78.5px;height:1px;background:#3a3a3c"></div>
<div class="a" style="left:864.7px;top:324.8px;width:4.6px;height:7.6px;background:#f0f0f0;border-radius:1.5px"></div>
<div class="a" style="left:950.4px;top:321.6px;width:38.39999999999998px;height:14px;background:#2c2c2f;border-radius:2px"></div>
<div class="a" style="left:990.3px;top:321.6px;width:10px;height:14px;background:#2c2c2f;border-radius:2px"></div>
<svg class="a" style="left:990.3px;top:321.6px" width="10" height="14"><path d="M3 5 L5 3 L7 5 M3 9 L5 11 L7 9" fill="none" stroke="#cfcfcf" stroke-width="1"/></svg>
<div class="a" style="left:964px;top:324.6px;font-size:7px;line-height:8px;color:#e6e6e6;white-space:nowrap">0%</div>
<svg class="a" style="left:1003px;top:322.6px" width="22" height="12"><path d="M10.7 2 L14.7 6 L10.7 10 L6.7 6 Z" fill="none" stroke="#d6d6d6" stroke-width="1"/><path d="M3 4 L1.5 6 L3 8 M18.5 4 L20 6 L18.5 8" fill="none" stroke="#3a3a3c" stroke-width="0.8"/></svg>
<div class="a" style="left:831px;top:346.0px;font-size:6.5px;line-height:9px;color:#d0d0d0;white-space:nowrap"><span class="cj">瘦脸</span></div>
<div class="a" style="left:867px;top:350.0px;width:78.5px;height:1px;background:#3a3a3c"></div>
<div class="a" style="left:864.7px;top:346.7px;width:4.6px;height:7.6px;background:#f0f0f0;border-radius:1.5px"></div>
<div class="a" style="left:950.4px;top:343.5px;width:38.39999999999998px;height:14px;background:#2c2c2f;border-radius:2px"></div>
<div class="a" style="left:990.3px;top:343.5px;width:10px;height:14px;background:#2c2c2f;border-radius:2px"></div>
<svg class="a" style="left:990.3px;top:343.5px" width="10" height="14"><path d="M3 5 L5 3 L7 5 M3 9 L5 11 L7 9" fill="none" stroke="#cfcfcf" stroke-width="1"/></svg>
<div class="a" style="left:964px;top:346.5px;font-size:7px;line-height:8px;color:#e6e6e6;white-space:nowrap">0%</div>
<svg class="a" style="left:1003px;top:344.5px" width="22" height="12"><path d="M10.7 2 L14.7 6 L10.7 10 L6.7 6 Z" fill="none" stroke="#d6d6d6" stroke-width="1"/><path d="M3 4 L1.5 6 L3 8 M18.5 4 L20 6 L18.5 8" fill="none" stroke="#3a3a3c" stroke-width="0.8"/></svg>

<div class="a" style="left:925.3px;top:373.2px;width:46.7px;height:12.7px;background:#28282a;border-radius:2px"></div>
<div class="a" style="left:942px;top:375.5px;font-size:6.5px;line-height:8px;color:#555;white-space:nowrap"><span class="cj">重置</span></div>
<div class="a" style="left:977.2px;top:373.2px;width:46.6px;height:12.7px;background:#4a4a4e;border-radius:2px"></div>
<div class="a" style="left:982.5px;top:375.5px;font-size:6.5px;line-height:8px;color:#eee;white-space:nowrap"><span class="cj">应用到全部</span></div>
<div class="a" style="left:832px;top:402px;width:191px;height:1px;background:#2e2e30"></div>
<div class="a" style="left:831px;top:412.5px;font-size:6.5px;line-height:8px;color:#d0d0d0;white-space:nowrap"><span class="cj">层级</span></div>

<!-- timeline panel -->
<div class="a" style="left:106px;top:425px;width:926px;height:218px;background:#1c1c1d;border-radius:4px;overflow:hidden">
  <div class="a" style="left:0;top:0;width:926px;height:21px;background:#28282b"></div>
</div>

<!-- timeline content -->
<div class="a" style="left:108.7px;top:428px;width:28.3px;height:15px;background:#313134;border-radius:2px"></div>
<svg class="a" style="left:106px;top:425px" width="926" height="21"><g fill="none" stroke="#d8d8d8" stroke-width="1.1">
<path d="M9.5 5.5 L16.5 9 L13.2 10.2 L15.8 13.5 L14.5 14.5 L12 11.3 L9.8 13.6 Z"/>
<path d="M23 9 L25.5 11.5 L28 9"/>
<path d="M47 7 H52.5 A3.2 3.2 0 0 1 52.5 13.4 H47.5 M49 5.5 L47 7 L49 8.5"/>
<path d="M74 7 H68.5 A3.2 3.2 0 0 0 68.5 13.4 H72.5 M72 5.5 L74 7 L72 8.5"/>
<path d="M89 5.5 Q91.5 5.5 91.5 7.5 V12.5 Q91.5 14.5 89 14.5 M93.5 5.5 Q91.5 5.5 91.5 7.5 M96 5.5 Q93.5 5.5 93.5 7.5 V12.5 Q93.5 14.5 96 14.5"/>
<path d="M108.5 7 H116.5 M110.5 7 L111 14.5 H114.5 L115 7 M111 7 V5.5 H114 V7"/>
</g>
<line x1="36.4" y1="5" x2="36.4" y2="16" stroke="#343436"/>
<rect x="741.3" y="3" width="14.4" height="14.5" rx="2" fill="#16292c"/>
<g fill="none" stroke="#1fb8c8" stroke-width="1.1"><rect x="743.5" y="8.5" width="10" height="3.5" fill="#1fb8c8"/><path d="M748.5 4.5 V6.5 M748.5 14 V16 M745 5.5 L746 7 M752 5.5 L751 7 M745 15 L746 13.6 M752 15 L751 13.6"/></g>
<g fill="none" stroke="#d0d0d0" stroke-width="1.1">
<path d="M771 8 H768.5 A2.2 2.2 0 0 0 768.5 12.4 H771.5 M775.5 8 H778.5 A2.2 2.2 0 0 1 778.5 12.4 H775.5 M770.5 10.2 H776.5"/>
<path d="M800.4 4.5 V16 M797.5 8 H794.8 V12.5 H797.5 M803.3 8 H806 V12.5 H803.3"/>
<circle cx="827" cy="10.3" r="4.2"/><path d="M825 10.3 H829 M830 13.3 L831.5 14.8"/>
<circle cx="915.4" cy="10.3" r="4.2"/><path d="M913.4 10.3 H917.4 M915.4 8.3 V12.3 M918.4 13.3 L919.9 14.8"/>
</g>
<line x1="813.2" y1="5" x2="813.2" y2="16" stroke="#343436"/>
<line x1="839.8" y1="10.3" x2="873.5" y2="10.3" stroke="#e6e6e6" stroke-width="1.4"/>
<line x1="873.5" y1="10.3" x2="902.4" y2="10.3" stroke="#3a3a3c" stroke-width="1"/>
<rect x="871" y="6.5" width="5" height="7.6" rx="1.5" fill="#f0f0f0"/>
</svg>
<svg class="a" style="left:0;top:0" width="1100" height="460"><path d="M107.2 447.5v2M110.7 447.5v2M114.2 447v6.5M117.7 447.5v2M121.2 447.5v2M124.7 447.5v2M128.2 447.5v2M131.8 447.5v2M135.3 447.5v2M138.8 447.5v2M142.3 447.5v2M145.8 447.5v2M149.3 447v6.5M170.4 447.5v2M173.9 447.5v2M177.4 447.5v2M180.9 447.5v2M184.4 447v6.5M205.5 447.5v2M209.0 447.5v2M212.5 447.5v2M216.0 447.5v2M219.5 447v6.5M240.6 447.5v2M244.1 447.5v2M247.6 447.5v2M251.1 447.5v2M254.6 447v6.5M275.7 447.5v2M279.2 447.5v2M282.7 447.5v2M286.2 447.5v2M289.7 447v6.5M310.8 447.5v2M314.3 447.5v2M317.8 447.5v2M321.3 447.5v2M324.8 447v6.5M345.9 447.5v2M349.4 447.5v2M352.9 447.5v2M356.4 447.5v2M359.9 447v6.5M381.0 447.5v2M384.5 447.5v2M388.0 447.5v2M391.5 447.5v2M395.0 447v6.5M416.1 447.5v2M419.6 447.5v2M423.1 447.5v2M426.6 447.5v2M430.1 447v6.5M451.2 447.5v2M454.7 447.5v2M458.2 447.5v2M461.7 447.5v2M465.2 447v6.5M486.3 447.5v2M489.8 447.5v2M493.3 447.5v2M496.8 447.5v2M500.3 447v6.5M521.4 447.5v2M524.9 447.5v2M528.4 447.5v2M531.9 447.5v2M535.4 447v6.5M556.5 447.5v2M560.0 447.5v2M563.5 447.5v2M567.0 447.5v2M570.5 447v6.5M591.6 447.5v2M595.1 447.5v2M598.6 447.5v2M602.1 447.5v2M605.6 447v6.5M626.7 447.5v2M630.2 447.5v2M633.7 447.5v2M637.2 447.5v2M640.7 447v6.5M661.8 447.5v2M665.3 447.5v2M668.8 447.5v2M672.3 447.5v2M675.8 447v6.5M696.9 447.5v2M700.4 447.5v2M703.9 447.5v2M707.4 447.5v2M710.9 447v6.5M732.0 447.5v2M735.5 447.5v2M739.0 447.5v2M742.5 447.5v2M746.0 447v6.5M767.1 447.5v2M770.6 447.5v2M774.1 447.5v2M777.6 447.5v2M781.1 447v6.5M802.2 447.5v2M805.7 447.5v2M809.2 447.5v2M812.7 447.5v2M816.2 447v6.5M837.3 447.5v2M840.8 447.5v2M844.3 447.5v2M847.8 447.5v2M851.3 447v6.5M872.4 447.5v2M875.9 447.5v2M879.4 447.5v2M882.9 447.5v2M886.4 447v6.5M907.5 447.5v2M911.0 447.5v2M914.5 447.5v2M918.0 447.5v2M921.5 447v6.5M942.6 447.5v2M946.1 447.5v2M949.6 447.5v2M953.1 447.5v2M956.6 447v6.5M977.7 447.5v2M981.2 447.5v2M984.7 447.5v2M988.2 447.5v2M991.7 447v6.5M1012.8 447.5v2M1016.3 447.5v2M1019.8 447.5v2M1023.3 447.5v2M1026.8 447v6.5" stroke="#48484a" stroke-width="0.8"/></svg>
<div class="a" style="left:0;top:446.5px;font-size:6.5px;line-height:8px;color:#5e5e60;white-space:nowrap"><span class="a" style="left:150.5px">00:00</span><span class="a" style="left:185.6px">00:10</span><span class="a" style="left:220.7px">00:20</span><span class="a" style="left:255.8px">00:30</span><span class="a" style="left:290.9px">00:40</span><span class="a" style="left:326.0px">00:50</span><span class="a" style="left:361.1px">01:00</span><span class="a" style="left:396.2px">01:10</span><span class="a" style="left:431.3px">01:20</span><span class="a" style="left:466.4px">01:30</span><span class="a" style="left:501.5px">01:40</span><span class="a" style="left:536.6px">01:50</span><span class="a" style="left:571.7px">02:00</span><span class="a" style="left:606.8px">02:10</span><span class="a" style="left:641.9px">02:20</span><span class="a" style="left:677.0px">02:30</span><span class="a" style="left:712.1px">02:40</span><span class="a" style="left:747.2px">02:50</span><span class="a" style="left:782.3px">03:00</span><span class="a" style="left:817.4px">03:10</span><span class="a" style="left:852.5px">03:20</span><span class="a" style="left:887.6px">03:30</span><span class="a" style="left:922.7px">03:40</span><span class="a" style="left:957.8px">03:50</span><span class="a" style="left:992.9px">04:00</span></div>
<div class="a" style="left:658.5px;top:475.4px;width:374px;height:11.4px;background:#2f58a3;border-radius:2px"></div>
<div class="a" style="left:178.2px;top:492.3px;width:458.4px;height:11.2px;background:#4b3f93;border-radius:2px"></div>
<div class="a" style="left:639.4px;top:492.3px;width:393px;height:11.2px;background:#4b3f93;border-radius:2px"></div>
<svg class="a" style="left:659.5px;top:476.8px" width="9.5" height="8.5"><rect width="9.5" height="8.5" fill="#4a6db0"/><path d="M4.7 1 L5.6 3.2 L8 3 L6.3 4.8 L7.2 7.5 L4.7 6.2 L2.2 7.5 L3 4.8 L1.3 3 L3.7 3.2 Z" fill="none" stroke="#eee" stroke-width="0.9"/></svg><div class="a" style="left:670px;top:476.8px;width:16px;height:8.5px;background:#4a6db0"></div><div class="a" style="left:671.2px;top:477.6px;font-size:6px;line-height:7px;color:#e8e8ef;white-space:nowrap"><span class="cj">特效</span></div>
<svg class="a" style="left:179.2px;top:493.6px" width="9.5" height="8.5"><rect width="9.5" height="8.5" fill="#5f55a5"/><g fill="none" stroke="#eee" stroke-width="0.9"><circle cx="4.8" cy="3" r="1.8"/><circle cx="3.3" cy="5.6" r="1.8"/><circle cx="6.3" cy="5.6" r="1.8"/></g></svg><div class="a" style="left:190.5px;top:493.6px;width:15px;height:8.5px;background:#5f55a5"></div><div class="a" style="left:191.7px;top:494.40000000000003px;font-size:6px;line-height:7px;color:#e8e8ef;white-space:nowrap"><span class="cj">调色</span></div>
<svg class="a" style="left:640.5px;top:493.6px" width="9.5" height="8.5"><rect width="9.5" height="8.5" fill="#5f55a5"/><g fill="none" stroke="#eee" stroke-width="0.9"><circle cx="4.8" cy="3" r="1.8"/><circle cx="3.3" cy="5.6" r="1.8"/><circle cx="6.3" cy="5.6" r="1.8"/></g></svg><div class="a" style="left:651.5px;top:493.6px;width:15px;height:8.5px;background:#5f55a5"></div><div class="a" style="left:652.7px;top:494.40000000000003px;font-size:6px;line-height:7px;color:#e8e8ef;white-space:nowrap"><span class="cj">调色</span></div>
<div class="a" style="left:176.9px;top:508.7px;width:462.6px;height:46.8px;background:#0b5059;border:1.5px solid #e8eeee;border-left-width:2px;border-radius:2px;overflow:hidden"><svg class="a" style="left:0;top:9.8px" width="460" height="24.8"><use href="#landS" x="0.0" y="0" width="65.8" height="24.8"/><use href="#landS" x="65.2" y="0" width="65.8" height="24.8"/><use href="#landS" x="130.4" y="0" width="65.8" height="24.8"/><use href="#landS" x="195.6" y="0" width="65.8" height="24.8"/><use href="#landS" x="260.8" y="0" width="65.8" height="24.8"/><use href="#landS" x="326.0" y="0" width="65.8" height="24.8"/><use href="#landS" x="391.2" y="0" width="65.8" height="24.8"/><use href="#landS" x="456.4" y="0" width="65.8" height="24.8"/></svg></div>
<div class="a" style="left:639.5px;top:509.2px;width:147px;height:46.3px;background:#0b5059;overflow:hidden"><svg class="a" style="left:0;top:11px" width="147" height="24.5"><use href="#corr" x="0.0" y="0" width="49" height="24.5"/><use href="#corr" x="48.5" y="0" width="49" height="24.5"/><use href="#corr" x="97.0" y="0" width="49" height="24.5"/></svg></div>
<div class="a" style="left:787px;top:509.2px;width:245px;height:46.3px;background:#0b5059;overflow:hidden"><svg class="a" style="left:0;top:11px" width="245" height="24.5"><use href="#crowd" x="0.0" y="0" width="49" height="24.5"/><use href="#crowd" x="48.5" y="0" width="49" height="24.5"/><use href="#crowd" x="97.0" y="0" width="49" height="24.5"/><use href="#crowd" x="145.5" y="0" width="49" height="24.5"/><use href="#crowd" x="194.0" y="0" width="49" height="24.5"/><use href="#crowd" x="242.5" y="0" width="49" height="24.5"/></svg></div>
<svg class="a" style="left:0;top:0" width="1100" height="600"><path d="M179.0 554.0v-5.2M180.5 554.0v-4.3M182.0 554.0v-3.6M183.5 554.0v-2.7M185.0 554.0v-1.7M186.5 554.0v-1.7M188.0 554.0v-2.5M189.5 554.0v-3.7M191.0 554.0v-6.0M192.5 554.0v-4.3M194.0 554.0v-3.1M195.5 554.0v-1.8M197.0 554.0v-1.0M198.5 554.0v-1.6M200.0 554.0v-2.3M201.5 554.0v-4.1M203.0 554.0v-4.1M204.5 554.0v-4.8M206.0 554.0v-3.9M207.5 554.0v-3.5M209.0 554.0v-3.0M210.5 554.0v-3.8M212.0 554.0v-5.4M213.5 554.0v-5.3M215.0 554.0v-6.5M216.5 554.0v-5.0M218.0 554.0v-4.2M219.5 554.0v-2.5M221.0 554.0v-2.1M222.5 554.0v-4.2M224.0 554.0v-4.6M225.5 554.0v-5.2M227.0 554.0v-4.8M228.5 554.0v-4.4M230.0 554.0v-2.9M231.5 554.0v-2.2M233.0 554.0v-1.5M234.5 554.0v-2.9M236.0 554.0v-4.2M237.5 554.0v-4.9M239.0 554.0v-5.8M240.5 554.0v-4.8M242.0 554.0v-3.6M243.5 554.0v-2.6M245.0 554.0v-2.2M246.5 554.0v-3.3M248.0 554.0v-4.7M249.5 554.0v-4.7M251.0 554.0v-4.6M252.5 554.0v-3.0M254.0 554.0v-2.8M255.5 554.0v-3.2M257.0 554.0v-4.4M258.5 554.0v-5.4M260.0 554.0v-6.1M261.5 554.0v-5.6M263.0 554.0v-5.2M264.5 554.0v-3.4M266.0 554.0v-2.7M267.5 554.0v-2.5M269.0 554.0v-2.8M270.5 554.0v-3.2M272.0 554.0v-3.8M273.5 554.0v-4.9M275.0 554.0v-4.6M276.5 554.0v-4.1M278.0 554.0v-3.4M279.5 554.0v-3.2M281.0 554.0v-2.3M282.5 554.0v-1.6M284.0 554.0v-2.4M285.5 554.0v-4.0M287.0 554.0v-4.3M288.5 554.0v-6.2M290.0 554.0v-6.3M291.5 554.0v-5.5M293.0 554.0v-3.4M294.5 554.0v-1.5M296.0 554.0v-2.1M297.5 554.0v-4.0M299.0 554.0v-7.0M300.5 554.0v-5.7M302.0 554.0v-4.2M303.5 554.0v-3.4M305.0 554.0v-2.3M306.5 554.0v-2.7M308.0 554.0v-3.4M309.5 554.0v-6.0M311.0 554.0v-4.9M312.5 554.0v-4.1M314.0 554.0v-2.9M315.5 554.0v-2.2M317.0 554.0v-2.0M318.5 554.0v-3.1M320.0 554.0v-4.3M321.5 554.0v-6.0M323.0 554.0v-6.0M324.5 554.0v-4.5M326.0 554.0v-4.3M327.5 554.0v-3.8M329.0 554.0v-2.6M330.5 554.0v-1.8M332.0 554.0v-2.8M333.5 554.0v-4.4M335.0 554.0v-5.5M336.5 554.0v-7.2M338.0 554.0v-7.0M339.5 554.0v-5.0M341.0 554.0v-4.2M342.5 554.0v-3.6M344.0 554.0v-2.8M345.5 554.0v-2.4M347.0 554.0v-3.4M348.5 554.0v-5.7M350.0 554.0v-6.1M351.5 554.0v-6.6M353.0 554.0v-4.8M354.5 554.0v-4.3M356.0 554.0v-3.9M357.5 554.0v-2.5M359.0 554.0v-2.3M360.5 554.0v-4.1M362.0 554.0v-4.5M363.5 554.0v-5.7M365.0 554.0v-5.7M366.5 554.0v-4.7M368.0 554.0v-2.9M369.5 554.0v-2.3M371.0 554.0v-2.8M372.5 554.0v-3.6M374.0 554.0v-3.9M375.5 554.0v-4.8M377.0 554.0v-4.5M378.5 554.0v-3.0M380.0 554.0v-2.5M381.5 554.0v-2.3M383.0 554.0v-2.8M384.5 554.0v-3.6M386.0 554.0v-3.4M387.5 554.0v-4.7M389.0 554.0v-4.2M390.5 554.0v-2.7M392.0 554.0v-3.0M393.5 554.0v-2.0M395.0 554.0v-1.8M396.5 554.0v-2.6M398.0 554.0v-3.6M399.5 554.0v-5.1M401.0 554.0v-4.5M402.5 554.0v-4.2M404.0 554.0v-3.1M405.5 554.0v-3.1M407.0 554.0v-2.7M408.5 554.0v-4.1M410.0 554.0v-5.6M411.5 554.0v-4.4M413.0 554.0v-3.9M414.5 554.0v-2.6M416.0 554.0v-2.7M417.5 554.0v-4.5M419.0 554.0v-6.0M420.5 554.0v-5.7M422.0 554.0v-5.8M423.5 554.0v-4.9M425.0 554.0v-3.4M426.5 554.0v-3.3M428.0 554.0v-2.2M429.5 554.0v-1.7M431.0 554.0v-3.1M432.5 554.0v-3.0M434.0 554.0v-3.9M435.5 554.0v-5.2M437.0 554.0v-4.4M438.5 554.0v-3.4M440.0 554.0v-2.6M441.5 554.0v-2.2M443.0 554.0v-3.3M444.5 554.0v-4.0M446.0 554.0v-3.3M447.5 554.0v-3.4M449.0 554.0v-2.8M450.5 554.0v-2.0M452.0 554.0v-2.8M453.5 554.0v-3.3M455.0 554.0v-3.6M456.5 554.0v-3.3M458.0 554.0v-3.3M459.5 554.0v-2.0M461.0 554.0v-1.9M462.5 554.0v-1.3M464.0 554.0v-2.4M465.5 554.0v-3.2M467.0 554.0v-4.4M468.5 554.0v-5.7M470.0 554.0v-6.8M471.5 554.0v-5.9M473.0 554.0v-4.0M474.5 554.0v-3.3M476.0 554.0v-1.5M477.5 554.0v-2.4M479.0 554.0v-3.4M480.5 554.0v-4.6M482.0 554.0v-6.2M483.5 554.0v-5.1M485.0 554.0v-3.5M486.5 554.0v-2.7M488.0 554.0v-2.1M489.5 554.0v-2.7M491.0 554.0v-4.3M492.5 554.0v-5.8M494.0 554.0v-7.0M495.5 554.0v-5.3M497.0 554.0v-4.7M498.5 554.0v-3.3M500.0 554.0v-2.5M501.5 554.0v-1.7M503.0 554.0v-2.2M504.5 554.0v-3.0M506.0 554.0v-4.5M507.5 554.0v-3.9M509.0 554.0v-4.5M510.5 554.0v-4.0M512.0 554.0v-3.4M513.5 554.0v-2.5M515.0 554.0v-3.6M516.5 554.0v-4.6M518.0 554.0v-5.7M519.5 554.0v-5.6M521.0 554.0v-3.8M522.5 554.0v-2.1M524.0 554.0v-1.9M525.5 554.0v-2.4M527.0 554.0v-3.3M528.5 554.0v-4.2M530.0 554.0v-3.1M531.5 554.0v-3.5M533.0 554.0v-2.9M534.5 554.0v-2.4M536.0 554.0v-1.9M537.5 554.0v-3.4M539.0 554.0v-4.8M540.5 554.0v-5.4M542.0 554.0v-3.8M543.5 554.0v-3.6M545.0 554.0v-2.9M546.5 554.0v-2.1M548.0 554.0v-3.6M549.5 554.0v-5.8M551.0 554.0v-6.9M552.5 554.0v-4.4M554.0 554.0v-4.4M555.5 554.0v-3.1M557.0 554.0v-1.6M558.5 554.0v-1.0M560.0 554.0v-2.7M561.5 554.0v-4.7M563.0 554.0v-5.6M564.5 554.0v-5.4M566.0 554.0v-3.6M567.5 554.0v-3.4M569.0 554.0v-2.3M570.5 554.0v-1.2M572.0 554.0v-2.6M573.5 554.0v-3.9M575.0 554.0v-6.0M576.5 554.0v-5.6M578.0 554.0v-4.5M579.5 554.0v-2.9M581.0 554.0v-2.2M582.5 554.0v-2.2M584.0 554.0v-3.6M585.5 554.0v-4.5M587.0 554.0v-5.1M588.5 554.0v-3.9M590.0 554.0v-2.7M591.5 554.0v-2.0M593.0 554.0v-1.3M594.5 554.0v-2.1M596.0 554.0v-3.6M597.5 554.0v-5.8M599.0 554.0v-5.9M600.5 554.0v-4.2M602.0 554.0v-2.7M603.5 554.0v-2.0M605.0 554.0v-2.6M606.5 554.0v-3.5M608.0 554.0v-4.7M609.5 554.0v-4.6M611.0 554.0v-3.6M612.5 554.0v-3.8M614.0 554.0v-2.8M615.5 554.0v-2.4M617.0 554.0v-3.2M618.5 554.0v-4.3M620.0 554.0v-4.3M621.5 554.0v-3.3M623.0 554.0v-2.5M624.5 554.0v-2.2M626.0 554.0v-2.5M627.5 554.0v-3.2M629.0 554.0v-4.9M630.5 554.0v-3.9M632.0 554.0v-3.4M633.5 554.0v-2.7M635.0 554.0v-2.3M636.5 554.0v-2.9M638.0 554.0v-3.9M639.5 554.0v-5.3M641.0 554.0v-5.3M642.5 554.0v-4.5M644.0 554.0v-2.6M645.5 554.0v-1.4M647.0 554.0v-2.4M648.5 554.0v-3.8M650.0 554.0v-5.8M651.5 554.0v-5.8M653.0 554.0v-5.3M654.5 554.0v-4.1M656.0 554.0v-2.5M657.5 554.0v-2.0M659.0 554.0v-1.9M660.5 554.0v-3.5M662.0 554.0v-5.5M663.5 554.0v-4.1M665.0 554.0v-3.8M666.5 554.0v-2.6M668.0 554.0v-2.1M669.5 554.0v-2.5M671.0 554.0v-3.7M672.5 554.0v-3.7M674.0 554.0v-4.9M675.5 554.0v-3.9M677.0 554.0v-3.8M678.5 554.0v-2.6M680.0 554.0v-2.0M681.5 554.0v-3.1M683.0 554.0v-5.0M684.5 554.0v-6.0M686.0 554.0v-5.8M687.5 554.0v-4.2M689.0 554.0v-3.7M690.5 554.0v-2.5M692.0 554.0v-1.1M693.5 554.0v-2.6M695.0 554.0v-4.3M696.5 554.0v-5.3M698.0 554.0v-4.4M699.5 554.0v-3.1M701.0 554.0v-2.0M702.5 554.0v-1.7M704.0 554.0v-3.3M705.5 554.0v-3.8M707.0 554.0v-6.1M708.5 554.0v-4.5M710.0 554.0v-4.3M711.5 554.0v-3.7M713.0 554.0v-3.0M714.5 554.0v-2.4M716.0 554.0v-3.3M717.5 554.0v-4.0M719.0 554.0v-4.2M720.5 554.0v-2.9M722.0 554.0v-2.8M723.5 554.0v-3.1M725.0 554.0v-2.2M726.5 554.0v-2.5M728.0 554.0v-3.1M729.5 554.0v-4.1M731.0 554.0v-5.2M732.5 554.0v-4.7M734.0 554.0v-5.4M735.5 554.0v-4.8M737.0 554.0v-4.4M738.5 554.0v-3.5M740.0 554.0v-3.4M741.5 554.0v-2.3M743.0 554.0v-3.7M744.5 554.0v-4.9M746.0 554.0v-6.7M747.5 554.0v-5.3M749.0 554.0v-4.2M750.5 554.0v-3.3M752.0 554.0v-3.1M753.5 554.0v-2.2M755.0 554.0v-2.8M756.5 554.0v-3.3M758.0 554.0v-4.3M759.5 554.0v-4.0M761.0 554.0v-3.9M762.5 554.0v-2.3M764.0 554.0v-1.9M765.5 554.0v-1.5M767.0 554.0v-3.8M768.5 554.0v-5.0M770.0 554.0v-4.6M771.5 554.0v-4.6M773.0 554.0v-3.4M774.5 554.0v-2.6M776.0 554.0v-4.6M777.5 554.0v-6.2M779.0 554.0v-7.1M780.5 554.0v-5.8M782.0 554.0v-4.3M783.5 554.0v-3.5M785.0 554.0v-2.4M786.5 554.0v-2.8M788.0 554.0v-4.6M789.5 554.0v-4.3M791.0 554.0v-6.2M792.5 554.0v-5.8M794.0 554.0v-4.7M795.5 554.0v-4.4M797.0 554.0v-2.6M798.5 554.0v-1.4M800.0 554.0v-1.0M801.5 554.0v-2.1M803.0 554.0v-3.0M804.5 554.0v-3.2M806.0 554.0v-3.9M807.5 554.0v-4.3M809.0 554.0v-2.8M810.5 554.0v-2.5M812.0 554.0v-2.0M813.5 554.0v-3.4M815.0 554.0v-4.2M816.5 554.0v-5.6M818.0 554.0v-4.9M819.5 554.0v-3.8M821.0 554.0v-3.3M822.5 554.0v-2.6M824.0 554.0v-2.7M825.5 554.0v-1.6M827.0 554.0v-2.3M828.5 554.0v-4.4M830.0 554.0v-4.3M831.5 554.0v-4.7M833.0 554.0v-3.1M834.5 554.0v-3.0M836.0 554.0v-2.3M837.5 554.0v-2.1M839.0 554.0v-2.0M840.5 554.0v-2.9M842.0 554.0v-4.0M843.5 554.0v-5.1M845.0 554.0v-4.6M846.5 554.0v-4.1M848.0 554.0v-3.0M849.5 554.0v-1.9M851.0 554.0v-2.2M852.5 554.0v-2.7M854.0 554.0v-3.7M855.5 554.0v-3.6M857.0 554.0v-4.5M858.5 554.0v-4.0M860.0 554.0v-3.9M861.5 554.0v-2.8M863.0 554.0v-2.7M864.5 554.0v-2.4M866.0 554.0v-2.8M867.5 554.0v-4.3M869.0 554.0v-5.7M870.5 554.0v-6.1M872.0 554.0v-6.0M873.5 554.0v-4.4M875.0 554.0v-2.6M876.5 554.0v-1.9M878.0 554.0v-3.0M879.5 554.0v-2.9M881.0 554.0v-3.5M882.5 554.0v-3.5M884.0 554.0v-3.1M885.5 554.0v-2.4M887.0 554.0v-2.2M888.5 554.0v-1.3M890.0 554.0v-2.7M891.5 554.0v-4.2M893.0 554.0v-5.0M894.5 554.0v-5.7M896.0 554.0v-4.3M897.5 554.0v-3.4M899.0 554.0v-3.3M900.5 554.0v-2.4M902.0 554.0v-3.5M903.5 554.0v-4.1M905.0 554.0v-3.6M906.5 554.0v-2.4M908.0 554.0v-1.8M909.5 554.0v-2.0M911.0 554.0v-4.3M912.5 554.0v-8.0M914.0 554.0v-5.3M915.5 554.0v-4.1M917.0 554.0v-3.9M918.5 554.0v-2.4M920.0 554.0v-1.5M921.5 554.0v-1.5M923.0 554.0v-2.3M924.5 554.0v-4.3M926.0 554.0v-4.5M927.5 554.0v-3.9M929.0 554.0v-2.9M930.5 554.0v-2.4M932.0 554.0v-1.5M933.5 554.0v-2.4M935.0 554.0v-3.3M936.5 554.0v-4.6M938.0 554.0v-5.4M939.5 554.0v-3.8M941.0 554.0v-3.0M942.5 554.0v-2.4M944.0 554.0v-1.2M945.5 554.0v-2.5M947.0 554.0v-3.8M948.5 554.0v-4.9M950.0 554.0v-3.7M951.5 554.0v-3.0M953.0 554.0v-2.7M954.5 554.0v-2.3M956.0 554.0v-2.2M957.5 554.0v-3.0M959.0 554.0v-3.5M960.5 554.0v-4.5M962.0 554.0v-3.1M963.5 554.0v-2.5M965.0 554.0v-2.0M966.5 554.0v-2.2M968.0 554.0v-3.2M969.5 554.0v-4.4M971.0 554.0v-6.9M972.5 554.0v-4.7M974.0 554.0v-4.1M975.5 554.0v-3.7M977.0 554.0v-2.7M978.5 554.0v-2.3M980.0 554.0v-2.9M981.5 554.0v-3.9M983.0 554.0v-5.7M984.5 554.0v-4.6M986.0 554.0v-4.4M987.5 554.0v-3.2M989.0 554.0v-2.4M990.5 554.0v-1.8M992.0 554.0v-2.7M993.5 554.0v-3.4M995.0 554.0v-4.8M996.5 554.0v-4.6M998.0 554.0v-3.5M999.5 554.0v-3.5M1001.0 554.0v-2.3M1002.5 554.0v-1.8M1004.0 554.0v-2.0M1005.5 554.0v-4.2M1007.0 554.0v-5.2M1008.5 554.0v-4.6M1010.0 554.0v-3.4M1011.5 554.0v-3.0M1013.0 554.0v-2.3M1014.5 554.0v-1.3M1016.0 554.0v-1.9M1017.5 554.0v-3.5M1019.0 554.0v-4.2M1020.5 554.0v-4.5M1022.0 554.0v-5.0M1023.5 554.0v-4.5M1025.0 554.0v-3.6M1026.5 554.0v-3.4M1028.0 554.0v-2.6M1029.5 554.0v-3.3" stroke="#187880" stroke-width="1.0"/></svg>
<svg class="a" style="left:179.5px;top:510.5px" width="9.5" height="8.5"><rect width="9.5" height="8.5" fill="#2a6b73"/><path d="M4.7 1 L5.6 3.2 L8 3 L6.3 4.8 L7.2 7.5 L4.7 6.2 L2.2 7.5 L3 4.8 L1.3 3 L3.7 3.2 Z" fill="none" stroke="#eee" stroke-width="0.9"/></svg><div class="a" style="left:190.3px;top:510.5px;width:14.5px;height:8.5px;background:#2a6b73"></div><div class="a" style="left:191.5px;top:511.3px;font-size:6px;line-height:7px;color:#e8e8ef;white-space:nowrap"><span class="cj">特效</span></div>
<svg class="a" style="left:208.5px;top:510.5px" width="9.5" height="8.5"><rect width="9.5" height="8.5" fill="#2a6b73"/><g fill="none" stroke="#eee" stroke-width="0.9"><circle cx="4.8" cy="3" r="1.8"/><circle cx="3.3" cy="5.6" r="1.8"/><circle cx="6.3" cy="5.6" r="1.8"/></g></svg><div class="a" style="left:219.5px;top:510.5px;width:14.5px;height:8.5px;background:#2a6b73"></div><div class="a" style="left:220.7px;top:511.3px;font-size:6px;line-height:7px;color:#e8e8ef;white-space:nowrap"><span class="cj">滤镜</span></div>
<svg class="a" style="left:237.5px;top:510.5px" width="9.5" height="8.5"><rect width="9.5" height="8.5" fill="#2a6b73"/><path d="M1.5 3 H8 M1.5 6 H8" stroke="#eee" stroke-width="0.9"/><circle cx="6" cy="3" r="1" fill="#eee"/><circle cx="3.5" cy="6" r="1" fill="#eee"/></svg><div class="a" style="left:248.3px;top:510.5px;width:14.5px;height:8.5px;background:#2a6b73"></div><div class="a" style="left:249.5px;top:511.3px;font-size:6px;line-height:7px;color:#e8e8ef;white-space:nowrap"><span class="cj">调节</span></div>
<div class="a" style="left:265.8px;top:510.5px;width:51px;height:8.5px;background:#2a6b73"></div><div class="a" style="left:267.0px;top:511.3px;font-size:6px;line-height:7px;color:#e8e8ef;white-space:nowrap">RV0012341.mov</div>
<svg class="a" style="left:640.5px;top:510.5px" width="9.5" height="8.5"><rect width="9.5" height="8.5" fill="#2a6b73"/><path d="M4.7 1 L5.6 3.2 L8 3 L6.3 4.8 L7.2 7.5 L4.7 6.2 L2.2 7.5 L3 4.8 L1.3 3 L3.7 3.2 Z" fill="none" stroke="#eee" stroke-width="0.9"/></svg><div class="a" style="left:650px;top:510.5px;width:14.5px;height:8.5px;background:#2a6b73"></div><div class="a" style="left:651.2px;top:511.3px;font-size:6px;line-height:7px;color:#e8e8ef;white-space:nowrap"><span class="cj">特效</span></div>
<svg class="a" style="left:668.5px;top:510.5px" width="9.5" height="8.5"><rect width="9.5" height="8.5" fill="#2a6b73"/><g fill="none" stroke="#eee" stroke-width="0.9"><circle cx="4.8" cy="3" r="1.8"/><circle cx="3.3" cy="5.6" r="1.8"/><circle cx="6.3" cy="5.6" r="1.8"/></g></svg><div class="a" style="left:678.5px;top:510.5px;width:14.5px;height:8.5px;background:#2a6b73"></div><div class="a" style="left:679.7px;top:511.3px;font-size:6px;line-height:7px;color:#e8e8ef;white-space:nowrap"><span class="cj">滤镜</span></div>
<svg class="a" style="left:696px;top:510.5px" width="9.5" height="8.5"><rect width="9.5" height="8.5" fill="#2a6b73"/><path d="M1.5 3 H8 M1.5 6 H8" stroke="#eee" stroke-width="0.9"/><circle cx="6" cy="3" r="1" fill="#eee"/><circle cx="3.5" cy="6" r="1" fill="#eee"/></svg><div class="a" style="left:706px;top:510.5px;width:14.5px;height:8.5px;background:#2a6b73"></div><div class="a" style="left:707.2px;top:511.3px;font-size:6px;line-height:7px;color:#e8e8ef;white-space:nowrap"><span class="cj">调节</span></div>
<div class="a" style="left:725px;top:510.5px;width:51px;height:8.5px;background:#2a6b73"></div><div class="a" style="left:726.2px;top:511.3px;font-size:6px;line-height:7px;color:#e8e8ef;white-space:nowrap">RVC012349.mov</div>
<div class="a" style="left:787.5px;top:510.5px;width:50px;height:8.5px;background:#2a6b73"></div><div class="a" style="left:788.7px;top:511.3px;font-size:6px;line-height:7px;color:#e8e8ef;white-space:nowrap">RV0012341.mov</div>
<div class="a" style="left:137.3px;top:516.6px;width:30.7px;height:31px;background:#262628;border-radius:5px"></div>
<div class="a" style="left:140.5px;top:519.5px;width:24.5px;height:25px;background:#3a3a3c;border-radius:4px"></div>
<svg class="a" style="left:146px;top:525px" width="14" height="14"><circle cx="6.8" cy="7" r="5.3" fill="#e6e6e6"/><path d="M4 5.8 H5.5 L7.8 4 V10 L5.5 8.2 H4 Z" fill="#3a3a3c"/><path d="M8.8 5.5 Q9.8 7 8.8 8.5" stroke="#3a3a3c" fill="none" stroke-width="0.8"/></svg>
<div class="a" style="left:236.7px;top:561.1px;width:656.8px;height:29.4px;background:#09445a;border-radius:2px;overflow:hidden"><svg class="a" style="left:0;top:0" width="657" height="30"><path d="M0.5 29.4v-12.2M2.0 29.4v-9.2M3.5 29.4v-8.6M5.0 29.4v-6.6M6.5 29.4v-5.1M8.0 29.4v-5.1M9.5 29.4v-7.9M11.0 29.4v-10.1M12.5 29.4v-11.9M14.0 29.4v-10.9M15.5 29.4v-7.1M17.0 29.4v-5.1M18.5 29.4v-3.8M20.0 29.4v-2.0M21.5 29.4v-4.7M23.0 29.4v-7.9M24.5 29.4v-11.5M26.0 29.4v-10.7M27.5 29.4v-8.3M29.0 29.4v-7.8M30.5 29.4v-5.9M32.0 29.4v-3.2M33.5 29.4v-2.0M35.0 29.4v-4.0M36.5 29.4v-8.0M38.0 29.4v-6.9M39.5 29.4v-7.8M41.0 29.4v-6.7M42.5 29.4v-5.3M44.0 29.4v-5.3M45.5 29.4v-3.4M47.0 29.4v-7.4M48.5 29.4v-13.1M50.0 29.4v-10.8M51.5 29.4v-12.3M53.0 29.4v-8.5M54.5 29.4v-6.6M56.0 29.4v-4.9M57.5 29.4v-4.1M59.0 29.4v-5.0M60.5 29.4v-6.8M62.0 29.4v-8.3M63.5 29.4v-9.4M65.0 29.4v-7.9M66.5 29.4v-5.5M68.0 29.4v-3.2M69.5 29.4v-5.7M71.0 29.4v-7.5M72.5 29.4v-6.5M74.0 29.4v-5.8M75.5 29.4v-4.2M77.0 29.4v-1.8M78.5 29.4v-3.4M80.0 29.4v-6.2M81.5 29.4v-10.0M83.0 29.4v-10.2M84.5 29.4v-9.1M86.0 29.4v-8.0M87.5 29.4v-5.9M89.0 29.4v-5.2M90.5 29.4v-3.9M92.0 29.4v-4.6M93.5 29.4v-8.5M95.0 29.4v-10.2M96.5 29.4v-9.5M98.0 29.4v-9.1M99.5 29.4v-8.0M101.0 29.4v-6.9M102.5 29.4v-4.3M104.0 29.4v-3.7M105.5 29.4v-8.7M107.0 29.4v-13.0M108.5 29.4v-15.8M110.0 29.4v-11.9M111.5 29.4v-11.0M113.0 29.4v-7.9M114.5 29.4v-7.7M116.0 29.4v-6.0M117.5 29.4v-5.3M119.0 29.4v-6.9M120.5 29.4v-7.1M122.0 29.4v-10.5M123.5 29.4v-10.4M125.0 29.4v-8.2M126.5 29.4v-5.3M128.0 29.4v-3.6M129.5 29.4v-4.8M131.0 29.4v-11.3M132.5 29.4v-13.6M134.0 29.4v-9.7M135.5 29.4v-7.2M137.0 29.4v-6.3M138.5 29.4v-4.6M140.0 29.4v-8.3M141.5 29.4v-10.7M143.0 29.4v-11.7M144.5 29.4v-13.2M146.0 29.4v-8.3M147.5 29.4v-8.2M149.0 29.4v-4.6M150.5 29.4v-2.8M152.0 29.4v-3.4M153.5 29.4v-7.0M155.0 29.4v-11.3M156.5 29.4v-12.4M158.0 29.4v-11.1M159.5 29.4v-9.4M161.0 29.4v-6.9M162.5 29.4v-6.0M164.0 29.4v-6.3M165.5 29.4v-8.5M167.0 29.4v-7.1M168.5 29.4v-6.8M170.0 29.4v-6.7M171.5 29.4v-5.4M173.0 29.4v-5.3M174.5 29.4v-4.7M176.0 29.4v-6.1M177.5 29.4v-8.4M179.0 29.4v-8.3M180.5 29.4v-6.8M182.0 29.4v-6.2M183.5 29.4v-6.2M185.0 29.4v-5.8M186.5 29.4v-5.4M188.0 29.4v-7.8M189.5 29.4v-9.1M191.0 29.4v-8.5M192.5 29.4v-6.8M194.0 29.4v-4.5M195.5 29.4v-3.3M197.0 29.4v-2.7M198.5 29.4v-8.2M200.0 29.4v-11.0M201.5 29.4v-12.1M203.0 29.4v-8.0M204.5 29.4v-5.3M206.0 29.4v-4.2M207.5 29.4v-5.7M209.0 29.4v-7.4M210.5 29.4v-9.7M212.0 29.4v-6.6M213.5 29.4v-6.5M215.0 29.4v-4.9M216.5 29.4v-4.2M218.0 29.4v-2.6M219.5 29.4v-3.0M221.0 29.4v-5.0M222.5 29.4v-6.0M224.0 29.4v-8.5M225.5 29.4v-8.0M227.0 29.4v-6.5M228.5 29.4v-4.3M230.0 29.4v-2.7M231.5 29.4v-4.2M233.0 29.4v-9.5M234.5 29.4v-15.4M236.0 29.4v-10.9M237.5 29.4v-11.2M239.0 29.4v-6.9M240.5 29.4v-5.4M242.0 29.4v-3.5M243.5 29.4v-3.3M245.0 29.4v-4.4M246.5 29.4v-5.9M248.0 29.4v-8.1M249.5 29.4v-8.1M251.0 29.4v-8.8M252.5 29.4v-6.2M254.0 29.4v-6.0M255.5 29.4v-4.5M257.0 29.4v-4.7M258.5 29.4v-6.4M260.0 29.4v-7.2M261.5 29.4v-8.1M263.0 29.4v-7.4M264.5 29.4v-6.6M266.0 29.4v-4.8M267.5 29.4v-4.0M269.0 29.4v-3.5M270.5 29.4v-2.4M272.0 29.4v-6.0M273.5 29.4v-11.1M275.0 29.4v-12.8M276.5 29.4v-11.0M278.0 29.4v-6.7M279.5 29.4v-5.3M281.0 29.4v-2.9M282.5 29.4v-6.1M284.0 29.4v-7.6M285.5 29.4v-7.0M287.0 29.4v-7.0M288.5 29.4v-4.4M290.0 29.4v-4.2M291.5 29.4v-2.7M293.0 29.4v-3.9M294.5 29.4v-6.1M296.0 29.4v-9.6M297.5 29.4v-9.1M299.0 29.4v-7.5M300.5 29.4v-8.3M302.0 29.4v-6.1M303.5 29.4v-5.6M305.0 29.4v-5.7M306.5 29.4v-8.3M308.0 29.4v-11.3M309.5 29.4v-9.0M311.0 29.4v-8.2M312.5 29.4v-7.8M314.0 29.4v-6.5M315.5 29.4v-4.6M317.0 29.4v-2.0M318.5 29.4v-6.4M320.0 29.4v-12.2M321.5 29.4v-12.8M323.0 29.4v-11.4M324.5 29.4v-7.8M326.0 29.4v-5.7M327.5 29.4v-3.9M329.0 29.4v-2.1M330.5 29.4v-6.4M332.0 29.4v-10.5M333.5 29.4v-12.2M335.0 29.4v-8.9M336.5 29.4v-7.4M338.0 29.4v-5.8M339.5 29.4v-5.2M341.0 29.4v-3.3M342.5 29.4v-4.2M344.0 29.4v-5.4M345.5 29.4v-7.5M347.0 29.4v-13.0M348.5 29.4v-13.3M350.0 29.4v-12.3M351.5 29.4v-8.6M353.0 29.4v-6.9M354.5 29.4v-4.9M356.0 29.4v-3.2M357.5 29.4v-5.7M359.0 29.4v-6.6M360.5 29.4v-7.8M362.0 29.4v-7.1M363.5 29.4v-4.8M365.0 29.4v-4.3M366.5 29.4v-3.6M368.0 29.4v-2.3M369.5 29.4v-3.7M371.0 29.4v-5.3M372.5 29.4v-7.9M374.0 29.4v-8.0M375.5 29.4v-9.5M377.0 29.4v-8.1M378.5 29.4v-6.7M380.0 29.4v-5.8M381.5 29.4v-4.3M383.0 29.4v-4.5M384.5 29.4v-6.8M386.0 29.4v-8.6M387.5 29.4v-9.3M389.0 29.4v-7.3M390.5 29.4v-4.8M392.0 29.4v-4.3M393.5 29.4v-2.6M395.0 29.4v-3.9M396.5 29.4v-8.2M398.0 29.4v-10.8M399.5 29.4v-11.6M401.0 29.4v-10.0M402.5 29.4v-8.0M404.0 29.4v-6.6M405.5 29.4v-5.1M407.0 29.4v-4.6M408.5 29.4v-9.1M410.0 29.4v-10.4M411.5 29.4v-11.5M413.0 29.4v-8.8M414.5 29.4v-4.8M416.0 29.4v-2.4M417.5 29.4v-4.0M419.0 29.4v-7.5M420.5 29.4v-9.7M422.0 29.4v-9.7M423.5 29.4v-6.3M425.0 29.4v-3.3M426.5 29.4v-3.7M428.0 29.4v-6.9M429.5 29.4v-10.0M431.0 29.4v-10.1M432.5 29.4v-9.4M434.0 29.4v-5.9M435.5 29.4v-3.5M437.0 29.4v-5.2M438.5 29.4v-8.6M440.0 29.4v-8.5M441.5 29.4v-13.2M443.0 29.4v-14.5M444.5 29.4v-10.5M446.0 29.4v-9.1M447.5 29.4v-6.2M449.0 29.4v-4.8M450.5 29.4v-4.2M452.0 29.4v-5.0M453.5 29.4v-6.5M455.0 29.4v-9.7M456.5 29.4v-7.3M458.0 29.4v-5.1M459.5 29.4v-3.4M461.0 29.4v-2.4M462.5 29.4v-5.6M464.0 29.4v-7.6M465.5 29.4v-10.8M467.0 29.4v-10.5M468.5 29.4v-11.1M470.0 29.4v-9.7M471.5 29.4v-6.0M473.0 29.4v-6.0M474.5 29.4v-3.0M476.0 29.4v-1.5M477.5 29.4v-3.7M479.0 29.4v-6.7M480.5 29.4v-9.6M482.0 29.4v-9.0M483.5 29.4v-10.3M485.0 29.4v-7.1M486.5 29.4v-5.8M488.0 29.4v-4.3M489.5 29.4v-2.5M491.0 29.4v-3.6M492.5 29.4v-5.4M494.0 29.4v-6.5M495.5 29.4v-7.1M497.0 29.4v-8.7M498.5 29.4v-6.7M500.0 29.4v-5.3M501.5 29.4v-4.9M503.0 29.4v-3.8M504.5 29.4v-4.6M506.0 29.4v-7.8M507.5 29.4v-8.8M509.0 29.4v-12.6M510.5 29.4v-13.4M512.0 29.4v-9.2M513.5 29.4v-10.7M515.0 29.4v-8.7M516.5 29.4v-5.1M518.0 29.4v-4.9M519.5 29.4v-5.5M521.0 29.4v-6.9M522.5 29.4v-9.5M524.0 29.4v-8.8M525.5 29.4v-9.7M527.0 29.4v-9.8M528.5 29.4v-8.1M530.0 29.4v-6.4M531.5 29.4v-6.2M533.0 29.4v-5.7M534.5 29.4v-6.8M536.0 29.4v-6.9M537.5 29.4v-9.7M539.0 29.4v-10.4M540.5 29.4v-8.5M542.0 29.4v-7.1M543.5 29.4v-7.3M545.0 29.4v-5.3M546.5 29.4v-4.9M548.0 29.4v-6.1M549.5 29.4v-7.8M551.0 29.4v-9.2M552.5 29.4v-12.1M554.0 29.4v-9.6M555.5 29.4v-8.7M557.0 29.4v-6.1M558.5 29.4v-4.7M560.0 29.4v-5.2M561.5 29.4v-6.3M563.0 29.4v-6.6M564.5 29.4v-7.3M566.0 29.4v-8.7M567.5 29.4v-7.7M569.0 29.4v-6.6M570.5 29.4v-5.4M572.0 29.4v-4.7M573.5 29.4v-7.3M575.0 29.4v-8.8M576.5 29.4v-10.7M578.0 29.4v-12.7M579.5 29.4v-12.2M581.0 29.4v-8.3M582.5 29.4v-6.7M584.0 29.4v-6.2M585.5 29.4v-5.4M587.0 29.4v-7.5M588.5 29.4v-7.2M590.0 29.4v-8.9M591.5 29.4v-8.8M593.0 29.4v-7.7M594.5 29.4v-6.5M596.0 29.4v-4.0M597.5 29.4v-3.0M599.0 29.4v-1.8M600.5 29.4v-3.2M602.0 29.4v-5.6M603.5 29.4v-7.0M605.0 29.4v-8.2M606.5 29.4v-6.6M608.0 29.4v-5.8M609.5 29.4v-4.4M611.0 29.4v-3.7M612.5 29.4v-4.5M614.0 29.4v-8.6M615.5 29.4v-9.7M617.0 29.4v-9.8M618.5 29.4v-10.2M620.0 29.4v-7.7M621.5 29.4v-6.0M623.0 29.4v-3.3M624.5 29.4v-4.9M626.0 29.4v-5.8M627.5 29.4v-8.5M629.0 29.4v-8.6M630.5 29.4v-8.8M632.0 29.4v-7.3M633.5 29.4v-4.0M635.0 29.4v-2.9M636.5 29.4v-5.0M638.0 29.4v-7.3M639.5 29.4v-8.0M641.0 29.4v-8.4M642.5 29.4v-6.6M644.0 29.4v-7.2M645.5 29.4v-4.4M647.0 29.4v-4.9M648.5 29.4v-7.5M650.0 29.4v-8.9M651.5 29.4v-11.2M653.0 29.4v-8.9M654.5 29.4v-8.9" stroke="#1a84a3" stroke-width="1.0"/></svg></div>
<div class="a" style="left:238px;top:562.5px;width:32px;height:8.5px;background:#2d6677"></div><div class="a" style="left:239.2px;top:563.3px;font-size:6px;line-height:7px;color:#e8e8ef;white-space:nowrap"><span class="cj">变速</span> 2.0x</div>
<div class="a" style="left:273px;top:562.5px;width:27px;height:8.5px;background:#2d6677"></div><div class="a" style="left:274.2px;top:563.3px;font-size:6px;line-height:7px;color:#e8e8ef;white-space:nowrap"><span class="cj">录音</span>.wav</div>
<div class="a" style="left:303px;top:562.5px;width:30px;height:8.5px;background:#2d6677"></div><div class="a" style="left:304.2px;top:563.3px;font-size:6px;line-height:7px;color:#e8e8ef;white-space:nowrap">00:00:00</div>
<div class="a" style="left:236.7px;top:596.3px;width:796px;height:29px;background:#0f2f5e;border-radius:2px;overflow:hidden"><svg class="a" style="left:0;top:0" width="796" height="30"><path d="M0.5 29.0v-14.3M2.0 29.0v-10.7M3.5 29.0v-8.5M5.0 29.0v-6.6M6.5 29.0v-5.7M8.0 29.0v-4.2M9.5 29.0v-4.7M11.0 29.0v-6.0M12.5 29.0v-7.4M14.0 29.0v-11.8M15.5 29.0v-9.4M17.0 29.0v-8.4M18.5 29.0v-6.9M20.0 29.0v-4.7M21.5 29.0v-3.2M23.0 29.0v-3.6M24.5 29.0v-6.9M26.0 29.0v-7.8M27.5 29.0v-8.5M29.0 29.0v-6.4M30.5 29.0v-4.0M32.0 29.0v-3.0M33.5 29.0v-4.6M35.0 29.0v-6.5M36.5 29.0v-7.8M38.0 29.0v-8.0M39.5 29.0v-5.9M41.0 29.0v-3.9M42.5 29.0v-3.0M44.0 29.0v-4.8M45.5 29.0v-5.9M47.0 29.0v-8.2M48.5 29.0v-7.4M50.0 29.0v-5.7M51.5 29.0v-5.0M53.0 29.0v-2.9M54.5 29.0v-4.8M56.0 29.0v-5.8M57.5 29.0v-9.6M59.0 29.0v-9.6M60.5 29.0v-8.0M62.0 29.0v-8.7M63.5 29.0v-5.6M65.0 29.0v-4.6M66.5 29.0v-4.2M68.0 29.0v-5.1M69.5 29.0v-7.0M71.0 29.0v-8.9M72.5 29.0v-7.8M74.0 29.0v-7.9M75.5 29.0v-6.0M77.0 29.0v-4.6M78.5 29.0v-4.5M80.0 29.0v-5.1M81.5 29.0v-9.1M83.0 29.0v-10.0M84.5 29.0v-10.9M86.0 29.0v-9.0M87.5 29.0v-8.4M89.0 29.0v-4.9M90.5 29.0v-5.4M92.0 29.0v-7.3M93.5 29.0v-9.8M95.0 29.0v-11.3M96.5 29.0v-14.5M98.0 29.0v-12.2M99.5 29.0v-10.1M101.0 29.0v-7.4M102.5 29.0v-5.7M104.0 29.0v-3.4M105.5 29.0v-3.2M107.0 29.0v-5.9M108.5 29.0v-8.6M110.0 29.0v-13.7M111.5 29.0v-11.5M113.0 29.0v-7.7M114.5 29.0v-6.8M116.0 29.0v-4.7M117.5 29.0v-3.8M119.0 29.0v-4.6M120.5 29.0v-8.6M122.0 29.0v-11.2M123.5 29.0v-9.1M125.0 29.0v-7.1M126.5 29.0v-5.5M128.0 29.0v-5.0M129.5 29.0v-10.0M131.0 29.0v-10.1M132.5 29.0v-8.7M134.0 29.0v-5.3M135.5 29.0v-3.7M137.0 29.0v-2.4M138.5 29.0v-5.1M140.0 29.0v-6.7M141.5 29.0v-9.7M143.0 29.0v-9.7M144.5 29.0v-8.2M146.0 29.0v-8.3M147.5 29.0v-5.7M149.0 29.0v-5.2M150.5 29.0v-8.4M152.0 29.0v-9.9M153.5 29.0v-13.3M155.0 29.0v-14.4M156.5 29.0v-10.5M158.0 29.0v-6.5M159.5 29.0v-4.6M161.0 29.0v-1.6M162.5 29.0v-4.1M164.0 29.0v-7.0M165.5 29.0v-8.3M167.0 29.0v-7.6M168.5 29.0v-6.9M170.0 29.0v-5.8M171.5 29.0v-4.3M173.0 29.0v-2.4M174.5 29.0v-5.4M176.0 29.0v-8.5M177.5 29.0v-8.6M179.0 29.0v-8.0M180.5 29.0v-7.3M182.0 29.0v-5.9M183.5 29.0v-3.8M185.0 29.0v-5.9M186.5 29.0v-8.2M188.0 29.0v-8.5M189.5 29.0v-9.3M191.0 29.0v-7.6M192.5 29.0v-5.5M194.0 29.0v-4.3M195.5 29.0v-2.0M197.0 29.0v-4.1M198.5 29.0v-10.0M200.0 29.0v-12.6M201.5 29.0v-8.5M203.0 29.0v-8.0M204.5 29.0v-5.8M206.0 29.0v-4.7M207.5 29.0v-2.6M209.0 29.0v-4.5M210.5 29.0v-10.0M212.0 29.0v-11.3M213.5 29.0v-7.1M215.0 29.0v-6.1M216.5 29.0v-3.7M218.0 29.0v-2.3M219.5 29.0v-2.9M221.0 29.0v-5.8M222.5 29.0v-7.4M224.0 29.0v-9.4M225.5 29.0v-6.9M227.0 29.0v-4.5M228.5 29.0v-2.5M230.0 29.0v-5.0M231.5 29.0v-8.5M233.0 29.0v-10.6M234.5 29.0v-9.8M236.0 29.0v-6.8M237.5 29.0v-4.9M239.0 29.0v-4.0M240.5 29.0v-6.4M242.0 29.0v-7.2M243.5 29.0v-11.6M245.0 29.0v-11.7M246.5 29.0v-9.3M248.0 29.0v-8.2M249.5 29.0v-5.2M251.0 29.0v-4.3M252.5 29.0v-6.2M254.0 29.0v-6.9M255.5 29.0v-8.7M257.0 29.0v-6.6M258.5 29.0v-6.8M260.0 29.0v-6.0M261.5 29.0v-4.1M263.0 29.0v-5.3M264.5 29.0v-8.2M266.0 29.0v-9.6M267.5 29.0v-12.6M269.0 29.0v-12.0M270.5 29.0v-10.4M272.0 29.0v-10.8M273.5 29.0v-8.3M275.0 29.0v-4.9M276.5 29.0v-4.0M278.0 29.0v-4.3M279.5 29.0v-6.9M281.0 29.0v-8.5M282.5 29.0v-8.8M284.0 29.0v-7.8M285.5 29.0v-7.4M287.0 29.0v-5.8M288.5 29.0v-3.1M290.0 29.0v-1.9M291.5 29.0v-4.0M293.0 29.0v-7.0M294.5 29.0v-7.6M296.0 29.0v-12.8M297.5 29.0v-10.6M299.0 29.0v-8.4M300.5 29.0v-4.4M302.0 29.0v-2.4M303.5 29.0v-5.1M305.0 29.0v-9.1M306.5 29.0v-10.9M308.0 29.0v-13.1M309.5 29.0v-8.8M311.0 29.0v-6.7M312.5 29.0v-3.7M314.0 29.0v-3.7M315.5 29.0v-5.7M317.0 29.0v-7.9M318.5 29.0v-9.3M320.0 29.0v-8.8M321.5 29.0v-7.5M323.0 29.0v-5.9M324.5 29.0v-4.7M326.0 29.0v-4.2M327.5 29.0v-6.2M329.0 29.0v-6.4M330.5 29.0v-7.9M332.0 29.0v-10.8M333.5 29.0v-10.5M335.0 29.0v-10.8M336.5 29.0v-7.9M338.0 29.0v-5.3M339.5 29.0v-4.2M341.0 29.0v-2.7M342.5 29.0v-5.2M344.0 29.0v-6.8M345.5 29.0v-11.4M347.0 29.0v-8.1M348.5 29.0v-6.2M350.0 29.0v-5.0M351.5 29.0v-3.9M353.0 29.0v-1.8M354.5 29.0v-3.7M356.0 29.0v-5.0M357.5 29.0v-6.6M359.0 29.0v-8.4M360.5 29.0v-7.3M362.0 29.0v-7.5M363.5 29.0v-6.0M365.0 29.0v-6.3M366.5 29.0v-6.0M368.0 29.0v-7.2M369.5 29.0v-12.2M371.0 29.0v-11.6M372.5 29.0v-12.8M374.0 29.0v-8.5M375.5 29.0v-6.7M377.0 29.0v-3.5M378.5 29.0v-5.0M380.0 29.0v-7.0M381.5 29.0v-9.9M383.0 29.0v-8.7M384.5 29.0v-6.1M386.0 29.0v-5.4M387.5 29.0v-3.8M389.0 29.0v-5.0M390.5 29.0v-6.3M392.0 29.0v-8.7M393.5 29.0v-10.6M395.0 29.0v-12.9M396.5 29.0v-10.2M398.0 29.0v-7.2M399.5 29.0v-4.0M401.0 29.0v-6.0M402.5 29.0v-6.1M404.0 29.0v-9.8M405.5 29.0v-9.0M407.0 29.0v-7.6M408.5 29.0v-5.2M410.0 29.0v-3.1M411.5 29.0v-4.3M413.0 29.0v-6.9M414.5 29.0v-8.9M416.0 29.0v-9.3M417.5 29.0v-6.1M419.0 29.0v-6.0M420.5 29.0v-3.8M422.0 29.0v-2.6M423.5 29.0v-6.1M425.0 29.0v-8.6M426.5 29.0v-8.2M428.0 29.0v-7.5M429.5 29.0v-7.6M431.0 29.0v-5.5M432.5 29.0v-5.1M434.0 29.0v-3.7M435.5 29.0v-3.4M437.0 29.0v-4.4M438.5 29.0v-6.1M440.0 29.0v-8.3M441.5 29.0v-7.5M443.0 29.0v-8.1M444.5 29.0v-7.0M446.0 29.0v-5.0M447.5 29.0v-4.5M449.0 29.0v-3.4M450.5 29.0v-5.0M452.0 29.0v-7.2M453.5 29.0v-9.2M455.0 29.0v-10.5M456.5 29.0v-11.2M458.0 29.0v-9.8M459.5 29.0v-8.0M461.0 29.0v-5.2M462.5 29.0v-4.3M464.0 29.0v-4.4M465.5 29.0v-7.3M467.0 29.0v-12.7M468.5 29.0v-11.8M470.0 29.0v-7.8M471.5 29.0v-6.2M473.0 29.0v-4.1M474.5 29.0v-2.4M476.0 29.0v-4.9M477.5 29.0v-7.2M479.0 29.0v-12.4M480.5 29.0v-12.6M482.0 29.0v-11.9M483.5 29.0v-7.4M485.0 29.0v-4.2M486.5 29.0v-1.8M488.0 29.0v-5.3M489.5 29.0v-10.5M491.0 29.0v-11.0M492.5 29.0v-7.9M494.0 29.0v-6.5M495.5 29.0v-4.4M497.0 29.0v-2.4M498.5 29.0v-3.4M500.0 29.0v-6.5M501.5 29.0v-8.7M503.0 29.0v-9.9M504.5 29.0v-8.8M506.0 29.0v-7.6M507.5 29.0v-4.5M509.0 29.0v-3.0M510.5 29.0v-3.7M512.0 29.0v-6.3M513.5 29.0v-10.1M515.0 29.0v-13.0M516.5 29.0v-10.9M518.0 29.0v-9.8M519.5 29.0v-5.8M521.0 29.0v-3.7M522.5 29.0v-3.1M524.0 29.0v-5.0M525.5 29.0v-5.8M527.0 29.0v-8.9M528.5 29.0v-10.2M530.0 29.0v-8.3M531.5 29.0v-6.6M533.0 29.0v-4.5M534.5 29.0v-3.1M536.0 29.0v-4.3M537.5 29.0v-6.7M539.0 29.0v-10.3M540.5 29.0v-11.6M542.0 29.0v-10.5M543.5 29.0v-8.1M545.0 29.0v-4.4M546.5 29.0v-2.8M548.0 29.0v-5.7M549.5 29.0v-8.1M551.0 29.0v-7.0M552.5 29.0v-6.9M554.0 29.0v-4.4M555.5 29.0v-4.0M557.0 29.0v-3.5M558.5 29.0v-5.7M560.0 29.0v-7.8M561.5 29.0v-8.8M563.0 29.0v-9.6M564.5 29.0v-9.4M566.0 29.0v-6.7M567.5 29.0v-5.3M569.0 29.0v-3.4M570.5 29.0v-1.9M572.0 29.0v-5.3M573.5 29.0v-8.7M575.0 29.0v-9.2M576.5 29.0v-7.2M578.0 29.0v-5.7M579.5 29.0v-5.5M581.0 29.0v-4.5M582.5 29.0v-5.8M584.0 29.0v-6.7M585.5 29.0v-9.3M587.0 29.0v-6.1M588.5 29.0v-5.6M590.0 29.0v-3.6M591.5 29.0v-2.5M593.0 29.0v-4.9M594.5 29.0v-8.1M596.0 29.0v-11.0M597.5 29.0v-10.5M599.0 29.0v-7.5M600.5 29.0v-4.3M602.0 29.0v-5.6M603.5 29.0v-6.1M605.0 29.0v-6.4M606.5 29.0v-8.1M608.0 29.0v-8.2M609.5 29.0v-6.9M611.0 29.0v-5.6M612.5 29.0v-5.5M614.0 29.0v-4.8M615.5 29.0v-6.7M617.0 29.0v-8.4M618.5 29.0v-12.2M620.0 29.0v-12.8M621.5 29.0v-10.5M623.0 29.0v-9.3M624.5 29.0v-6.4M626.0 29.0v-6.0M627.5 29.0v-2.9M629.0 29.0v-4.0M630.5 29.0v-7.5M632.0 29.0v-9.0M633.5 29.0v-14.3M635.0 29.0v-9.0M636.5 29.0v-9.4M638.0 29.0v-6.0M639.5 29.0v-5.2M641.0 29.0v-6.5M642.5 29.0v-7.0M644.0 29.0v-7.0M645.5 29.0v-8.0M647.0 29.0v-5.0M648.5 29.0v-3.8M650.0 29.0v-3.6M651.5 29.0v-8.3M653.0 29.0v-11.3M654.5 29.0v-10.7M656.0 29.0v-9.5M657.5 29.0v-7.4M659.0 29.0v-6.9M660.5 29.0v-5.3M662.0 29.0v-5.6M663.5 29.0v-6.2M665.0 29.0v-6.1M666.5 29.0v-7.8M668.0 29.0v-8.3M669.5 29.0v-9.1M671.0 29.0v-7.6M672.5 29.0v-4.1M674.0 29.0v-2.6M675.5 29.0v-2.4M677.0 29.0v-4.0M678.5 29.0v-5.5M680.0 29.0v-6.9M681.5 29.0v-7.9M683.0 29.0v-6.8M684.5 29.0v-5.6M686.0 29.0v-4.8M687.5 29.0v-5.6M689.0 29.0v-6.0M690.5 29.0v-8.3M692.0 29.0v-10.9M693.5 29.0v-12.7M695.0 29.0v-8.0M696.5 29.0v-5.0M698.0 29.0v-2.8M699.5 29.0v-3.6M701.0 29.0v-5.1M702.5 29.0v-7.7M704.0 29.0v-11.6M705.5 29.0v-10.2M707.0 29.0v-9.1M708.5 29.0v-7.7M710.0 29.0v-5.9M711.5 29.0v-5.4M713.0 29.0v-6.7M714.5 29.0v-7.3M716.0 29.0v-8.9M717.5 29.0v-7.1M719.0 29.0v-6.3M720.5 29.0v-3.9M722.0 29.0v-3.8M723.5 29.0v-2.1M725.0 29.0v-3.4M726.5 29.0v-5.7M728.0 29.0v-9.4M729.5 29.0v-9.6M731.0 29.0v-7.2M732.5 29.0v-5.8M734.0 29.0v-4.0M735.5 29.0v-3.2M737.0 29.0v-4.6M738.5 29.0v-9.3M740.0 29.0v-11.0M741.5 29.0v-8.9M743.0 29.0v-8.7M744.5 29.0v-5.5M746.0 29.0v-4.7M747.5 29.0v-6.2M749.0 29.0v-8.5M750.5 29.0v-8.0M752.0 29.0v-9.1M753.5 29.0v-7.7M755.0 29.0v-5.2M756.5 29.0v-4.4M758.0 29.0v-3.0M759.5 29.0v-2.8M761.0 29.0v-4.8M762.5 29.0v-7.1M764.0 29.0v-9.3M765.5 29.0v-8.5M767.0 29.0v-6.1M768.5 29.0v-4.6M770.0 29.0v-2.9M771.5 29.0v-8.5M773.0 29.0v-12.8M774.5 29.0v-11.6M776.0 29.0v-10.3M777.5 29.0v-7.0M779.0 29.0v-6.9M780.5 29.0v-4.4M782.0 29.0v-2.7M783.5 29.0v-4.4M785.0 29.0v-5.6M786.5 29.0v-9.3M788.0 29.0v-7.1M789.5 29.0v-6.3M791.0 29.0v-5.3M792.5 29.0v-3.4M794.0 29.0v-3.5" stroke="#2387bd" stroke-width="1.0"/></svg></div>
<div class="a" style="left:238px;top:597.5px;width:15px;height:8.5px;background:#3a5a8a"></div><div class="a" style="left:239.2px;top:598.3px;font-size:6px;line-height:7px;color:#e8e8ef;white-space:nowrap"><span class="cj">音效</span></div>
<div class="a" style="left:558.2px;top:452px;width:1.6px;height:191px;background:#e0e0e0"></div>
<svg class="a" style="left:554.5px;top:445.5px" width="9" height="10"><path d="M1.2 1 H7.8 V6.2 L4.5 8.8 L1.2 6.2 Z" fill="#1c1c1d" stroke="#e8e8e8" stroke-width="1.3"/></svg>
<!-- PHONE -->
<div class="a" style="left:924px;top:462px;width:162px;height:340px;background:#161616;border-radius:22px;border:2px solid #2e4b60"></div>
<div class="a" style="left:931px;top:468.5px;width:148px;height:330px;background:#1e1e1e;border-radius:16px;overflow:hidden"></div>
<div class="a" style="left:965px;top:468px;width:80px;height:14px;background:#161616;border-radius:0 0 9px 9px"></div>
<svg class="a" style="left:931px;top:526px" width="148" height="83"><use href="#land" width="148" height="83"/></svg>
<div class="a" style="left:931px;top:663.5px;width:148px;height:140px;background:#111"></div>


<svg class="a" style="left:935px;top:491px" width="10" height="10"><path d="M2 2 L8 8 M8 2 L2 8" stroke="#e0e0e0" stroke-width="1"/></svg>
<svg class="a" style="left:1010px;top:490px" width="12" height="12"><circle cx="6" cy="6" r="4.4" fill="none" stroke="#ddd" stroke-width="0.8"/><path d="M4.6 5 Q4.6 3.5 6 3.5 Q7.4 3.5 7.4 4.8 Q7.4 5.7 6 6.2 V7" fill="none" stroke="#ddd" stroke-width="0.8"/><circle cx="6" cy="8.4" r="0.5" fill="#ddd"/></svg>
<div class="a" style="left:1026px;top:491.5px;width:22px;height:9.5px;background:#151515;border-radius:1px"></div>
<div class="a" style="left:1028px;top:493px;font-size:4.2px;line-height:6px;color:#ddd;white-space:nowrap">1080P ▾</div>
<div class="a" style="left:1054.2px;top:491.3px;width:19.3px;height:10px;background:#fe2c55;border-radius:1px"></div>
<div class="a" style="left:1058.5px;top:493px;font-size:5px;line-height:6px;color:#fff;white-space:nowrap"><span class="cj">导出</span></div>
<div class="a" style="left:995.5px;top:473.5px;width:19.5px;height:2px;background:#2a3a40;border-radius:1px"></div>
<div class="a" style="left:1018.5px;top:471.5px;width:5px;height:5px;border-radius:50%;border:0.8px solid #2a3a40"></div>
<div class="a" style="left:935px;top:653px;font-size:4.5px;line-height:6px;color:#999;white-space:nowrap">00:00/00:12</div>
<svg class="a" style="left:1000px;top:651px" width="10" height="10"><path d="M2.5 1.8 L7.8 5 L2.5 8.2 Z" fill="none" stroke="#ddd" stroke-width="0.9"/></svg>
<svg class="a" style="left:1031px;top:651px" width="48" height="10"><g fill="none" stroke-width="0.9"><path d="M4 3.5 H7.5 A2.5 2.5 0 0 1 7.5 8.5 H4.5 M5 2 L3.5 3.5 L5 5" stroke="#555"/><path d="M25 3.5 H21.5 A2.5 2.5 0 0 0 21.5 8.5 H24.5 M24 2 L25.5 3.5 L24 5" stroke="#555"/><path d="M36 4 V1.5 H38.5 M41.5 1.5 H44 V4 M44 6 V8.5 H41.5 M38.5 8.5 H36 V6 M36.5 2 L39 4.5 M43.5 2 L41 4.5 M43.5 8 L41 5.5 M36.5 8 L39 5.5" stroke="#ddd"/></g></svg>
<div class="a" style="left:1000px;top:666px;font-size:3.8px;line-height:5px;color:#777;white-space:nowrap"><span class="a" style="left:0">00:00</span><span class="a" style="left:23px">•</span><span class="a" style="left:38px">00:02</span><span class="a" style="left:60px">•</span><span class="a" style="left:73px">0</span></div>
<svg class="a" style="left:954px;top:695px" width="11" height="10"><path d="M2 3.5 H3.8 L6.5 1.5 V8.5 L3.8 6.5 H2 Z" fill="none" stroke="#ddd" stroke-width="0.8"/><path d="M8 4 V6" stroke="#ddd" stroke-width="0.8"/></svg>
<div class="a" style="left:954px;top:705px;font-size:3.2px;line-height:4px;color:#999;white-space:nowrap"><span class="cj">关闭原声</span></div>
<div class="a" style="left:974.8px;top:693px;width:19px;height:19px;overflow:hidden"><svg class="a" style="left:0;top:0" width="19" height="19"><use href="#landS" width="19" height="19"/></svg><div class="a" style="left:0;top:0;width:19px;height:19px;background:rgba(40,40,40,.4)"></div></div>
<div class="a" style="left:980px;top:696px;font-size:4px;line-height:6px;color:#eee;white-space:nowrap"><span class="cj">设置</span><br><span class="cj">封面</span></div>
<div class="a" style="left:1005.2px;top:693px;width:74px;height:19px;overflow:hidden"><svg class="a" style="left:0.0px;top:0" width="18.8" height="19"><use href="#landS" width="18.8" height="19"/></svg><svg class="a" style="left:18.8px;top:0" width="18.8" height="19"><use href="#landS" width="18.8" height="19"/></svg><svg class="a" style="left:37.6px;top:0" width="18.8" height="19"><use href="#landS" width="18.8" height="19"/></svg><svg class="a" style="left:56.4px;top:0" width="18.8" height="19"><use href="#landS" width="18.8" height="19"/></svg></div>
<div class="a" style="left:1064px;top:697px;width:12.5px;height:11px;background:#fff;border-radius:1px;box-shadow:-0.8px 0 0 #25f4ee,0.8px 0 0 #fe2c55"></div>
<svg class="a" style="left:1065.2px;top:697.5px" width="10" height="10"><path d="M5 2 V8 M2 5 H8" stroke="#222" stroke-width="1"/></svg>
<div class="a" style="left:1005.2px;top:714.4px;width:74px;height:12.8px;background:#232323"></div>
<div class="a" style="left:1007.5px;top:717.5px;font-size:4.5px;line-height:6px;color:#ddd;white-space:nowrap">+ <span class="cj">添加音频</span></div>
<div class="a" style="left:1004.3px;top:682.5px;width:1.5px;height:53px;background:#ccc"></div>
<svg class="a" style="left:939.0px;top:754px" width="12" height="12"><g fill="none" stroke="#ddd" stroke-width="0.75" transform="translate(1.2 1.2) scale(0.8)"><circle cx="3.5" cy="7.5" r="1.6"/><circle cx="8.5" cy="7.5" r="1.6"/><path d="M4.5 6.2 L8 1.5 M7.5 6.2 L4 1.5"/></g></svg>
<div class="a" style="left:941.8px;top:765.5px;font-size:3.6px;line-height:5px;color:#aaa;white-space:nowrap"><span class="cj">剪辑</span></div>
<svg class="a" style="left:961.0px;top:754px" width="12" height="12"><g fill="none" stroke="#ddd" stroke-width="0.75" transform="translate(1.2 1.2) scale(0.8)"><circle cx="4.5" cy="8" r="1.8"/><path d="M6.3 8 V2 Q7 3.5 8.5 3.5"/></g></svg>
<div class="a" style="left:963.8px;top:765.5px;font-size:3.6px;line-height:5px;color:#aaa;white-space:nowrap"><span class="cj">音频</span></div>
<svg class="a" style="left:982.5px;top:754px" width="12" height="12"><g fill="none" stroke="#ddd" stroke-width="0.75" transform="translate(1.2 1.2) scale(0.8)"><path d="M2 2 H10 M6 2 V10"/></g></svg>
<div class="a" style="left:985.3px;top:765.5px;font-size:3.6px;line-height:5px;color:#aaa;white-space:nowrap"><span class="cj">文本</span></div>
<svg class="a" style="left:1004.0px;top:754px" width="12" height="12"><g fill="none" stroke="#ddd" stroke-width="0.75" transform="translate(1.2 1.2) scale(0.8)"><circle cx="6" cy="6" r="3.8"/><path d="M6 2.2 Q9.8 2.2 9.8 6 L6 6"/></g></svg>
<div class="a" style="left:1006.8px;top:765.5px;font-size:3.6px;line-height:5px;color:#aaa;white-space:nowrap"><span class="cj">贴纸</span></div>
<svg class="a" style="left:1026.0px;top:754px" width="12" height="12"><g fill="none" stroke="#ddd" stroke-width="0.75" transform="translate(1.2 1.2) scale(0.8)"><rect x="2" y="2" width="8" height="8"/><rect x="4" y="5" width="4" height="3"/></g></svg>
<div class="a" style="left:1027.0px;top:765.5px;font-size:3.6px;line-height:5px;color:#aaa;white-space:nowrap"><span class="cj">画中画</span></div>
<svg class="a" style="left:1047.5px;top:754px" width="12" height="12"><g fill="none" stroke="#ddd" stroke-width="0.75" transform="translate(1.2 1.2) scale(0.8)"><path d="M6 1.5 L7.1 4.3 L10 4.1 L7.9 6.2 L8.9 9.3 L6 7.7 L3.1 9.3 L4.1 6.2 L2 4.1 L4.9 4.3 Z"/></g></svg>
<div class="a" style="left:1050.3px;top:765.5px;font-size:3.6px;line-height:5px;color:#aaa;white-space:nowrap"><span class="cj">特效</span></div>
<svg class="a" style="left:1069.0px;top:754px" width="12" height="12"><g fill="none" stroke="#ddd" stroke-width="0.75" transform="translate(1.2 1.2) scale(0.8)"><circle cx="6" cy="4.3" r="2.2"/><circle cx="4.2" cy="7.5" r="2.2"/><circle cx="7.8" cy="7.5" r="2.2"/></g></svg>
<div class="a" style="left:1071.8px;top:765.5px;font-size:3.6px;line-height:5px;color:#aaa;white-space:nowrap"><span class="cj">滤镜</span></div>
<!-- CLOUD FILE ICON -->
<svg class="a" style="left:1302px;top:636px" width="112" height="138">
<path d="M13.2 3.8 H82.5 Q85 3.8 87 5.6 L106.3 22.5 Q108.2 24.4 108.2 27.5 V123 A10 10 0 0 1 98.2 133 H13.2 A10 10 0 0 1 3.2 123 V13.8 A10 10 0 0 1 13.2 3.8 Z" fill="#212121" stroke="#3a3a3a" stroke-width="2.6"/>
<path d="M43.60 87.40 A13.4 13.4 0 0 1 40.15 61.05 A15.2 15.2 0 0 1 70.22 60.84 A13.4 13.4 0 0 1 67.70 87.40 Z" fill="#0a4c55" stroke="#1ec0d0" stroke-width="3.6" stroke-linejoin="round"/>
<path d="M64.96 58.85 A14.2 14.2 0 0 0 57.46 84.19" fill="none" stroke="#1ec0d0" stroke-width="1.4" stroke-dasharray="1.3 2.2" stroke-linecap="round"/>
</svg>

</body></html>
